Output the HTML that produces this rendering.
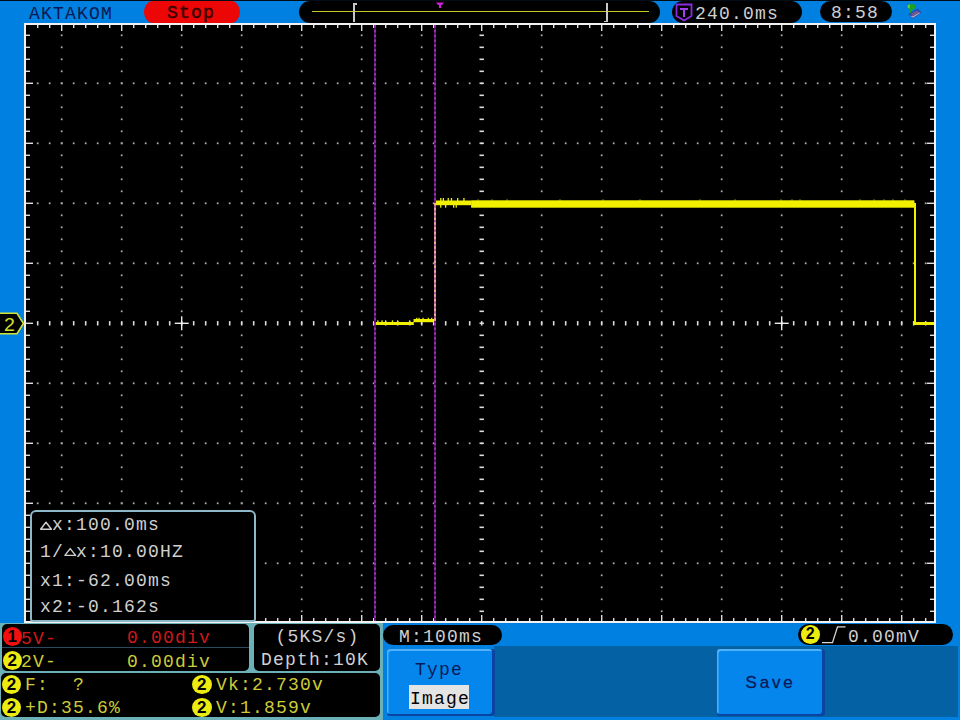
<!DOCTYPE html>
<html><head><meta charset="utf-8">
<style>
html,body{margin:0;padding:0;}
body{width:960px;height:720px;position:relative;overflow:hidden;background:#0080e0;font-family:"Liberation Mono",monospace;}
.a{position:absolute;}
.t{position:absolute;font-size:18px;line-height:18px;letter-spacing:1.2px;white-space:pre;}
.pill{position:absolute;background:#000;}
.circ{position:absolute;border-radius:50%;text-align:center;color:#000;font-family:"Liberation Sans",sans-serif;font-size:17px;line-height:19px;font-weight:bold;}
.w{color:#d0d0d0;}
.y{color:#cccc38;}
.r{color:#d01818;}
</style></head><body>
<div class="a" style="left:0;top:0;width:960px;height:1.4px;background:#040c18"></div>
<svg class="a" style="left:0;top:0" width="960" height="720" viewBox="0 0 960 720">
<rect x="24.00" y="23.00" width="912.00" height="600.00" fill="#f2f2f2"/>
<rect x="26.00" y="25.00" width="908.00" height="596.00" fill="#000"/>
<rect x="60.80" y="34.40" width="1.80" height="1.80" fill="#a8a8a8"/>
<rect x="60.80" y="46.40" width="1.80" height="1.80" fill="#a8a8a8"/>
<rect x="60.80" y="58.40" width="1.80" height="1.80" fill="#a8a8a8"/>
<rect x="60.80" y="70.40" width="1.80" height="1.80" fill="#a8a8a8"/>
<rect x="60.80" y="82.40" width="1.80" height="1.80" fill="#a8a8a8"/>
<rect x="60.80" y="94.40" width="1.80" height="1.80" fill="#a8a8a8"/>
<rect x="60.80" y="106.40" width="1.80" height="1.80" fill="#a8a8a8"/>
<rect x="60.80" y="118.40" width="1.80" height="1.80" fill="#a8a8a8"/>
<rect x="60.80" y="130.40" width="1.80" height="1.80" fill="#a8a8a8"/>
<rect x="60.80" y="142.40" width="1.80" height="1.80" fill="#a8a8a8"/>
<rect x="60.80" y="154.40" width="1.80" height="1.80" fill="#a8a8a8"/>
<rect x="60.80" y="166.40" width="1.80" height="1.80" fill="#a8a8a8"/>
<rect x="60.80" y="178.40" width="1.80" height="1.80" fill="#a8a8a8"/>
<rect x="60.80" y="190.40" width="1.80" height="1.80" fill="#a8a8a8"/>
<rect x="60.80" y="202.40" width="1.80" height="1.80" fill="#a8a8a8"/>
<rect x="60.80" y="214.40" width="1.80" height="1.80" fill="#a8a8a8"/>
<rect x="60.80" y="226.40" width="1.80" height="1.80" fill="#a8a8a8"/>
<rect x="60.80" y="238.40" width="1.80" height="1.80" fill="#a8a8a8"/>
<rect x="60.80" y="250.40" width="1.80" height="1.80" fill="#a8a8a8"/>
<rect x="60.80" y="262.40" width="1.80" height="1.80" fill="#a8a8a8"/>
<rect x="60.80" y="274.40" width="1.80" height="1.80" fill="#a8a8a8"/>
<rect x="60.80" y="286.40" width="1.80" height="1.80" fill="#a8a8a8"/>
<rect x="60.80" y="298.40" width="1.80" height="1.80" fill="#a8a8a8"/>
<rect x="60.80" y="310.40" width="1.80" height="1.80" fill="#a8a8a8"/>
<rect x="60.80" y="322.40" width="1.80" height="1.80" fill="#a8a8a8"/>
<rect x="60.80" y="334.40" width="1.80" height="1.80" fill="#a8a8a8"/>
<rect x="60.80" y="346.40" width="1.80" height="1.80" fill="#a8a8a8"/>
<rect x="60.80" y="358.40" width="1.80" height="1.80" fill="#a8a8a8"/>
<rect x="60.80" y="370.40" width="1.80" height="1.80" fill="#a8a8a8"/>
<rect x="60.80" y="382.40" width="1.80" height="1.80" fill="#a8a8a8"/>
<rect x="60.80" y="394.40" width="1.80" height="1.80" fill="#a8a8a8"/>
<rect x="60.80" y="406.40" width="1.80" height="1.80" fill="#a8a8a8"/>
<rect x="60.80" y="418.40" width="1.80" height="1.80" fill="#a8a8a8"/>
<rect x="60.80" y="430.40" width="1.80" height="1.80" fill="#a8a8a8"/>
<rect x="60.80" y="442.40" width="1.80" height="1.80" fill="#a8a8a8"/>
<rect x="60.80" y="454.40" width="1.80" height="1.80" fill="#a8a8a8"/>
<rect x="60.80" y="466.40" width="1.80" height="1.80" fill="#a8a8a8"/>
<rect x="60.80" y="478.40" width="1.80" height="1.80" fill="#a8a8a8"/>
<rect x="60.80" y="490.40" width="1.80" height="1.80" fill="#a8a8a8"/>
<rect x="60.80" y="502.40" width="1.80" height="1.80" fill="#a8a8a8"/>
<rect x="60.80" y="514.40" width="1.80" height="1.80" fill="#a8a8a8"/>
<rect x="60.80" y="526.40" width="1.80" height="1.80" fill="#a8a8a8"/>
<rect x="60.80" y="538.40" width="1.80" height="1.80" fill="#a8a8a8"/>
<rect x="60.80" y="550.40" width="1.80" height="1.80" fill="#a8a8a8"/>
<rect x="60.80" y="562.40" width="1.80" height="1.80" fill="#a8a8a8"/>
<rect x="60.80" y="574.40" width="1.80" height="1.80" fill="#a8a8a8"/>
<rect x="60.80" y="586.40" width="1.80" height="1.80" fill="#a8a8a8"/>
<rect x="60.80" y="598.40" width="1.80" height="1.80" fill="#a8a8a8"/>
<rect x="60.80" y="610.40" width="1.80" height="1.80" fill="#a8a8a8"/>
<rect x="120.80" y="34.40" width="1.80" height="1.80" fill="#a8a8a8"/>
<rect x="120.80" y="46.40" width="1.80" height="1.80" fill="#a8a8a8"/>
<rect x="120.80" y="58.40" width="1.80" height="1.80" fill="#a8a8a8"/>
<rect x="120.80" y="70.40" width="1.80" height="1.80" fill="#a8a8a8"/>
<rect x="120.80" y="82.40" width="1.80" height="1.80" fill="#a8a8a8"/>
<rect x="120.80" y="94.40" width="1.80" height="1.80" fill="#a8a8a8"/>
<rect x="120.80" y="106.40" width="1.80" height="1.80" fill="#a8a8a8"/>
<rect x="120.80" y="118.40" width="1.80" height="1.80" fill="#a8a8a8"/>
<rect x="120.80" y="130.40" width="1.80" height="1.80" fill="#a8a8a8"/>
<rect x="120.80" y="142.40" width="1.80" height="1.80" fill="#a8a8a8"/>
<rect x="120.80" y="154.40" width="1.80" height="1.80" fill="#a8a8a8"/>
<rect x="120.80" y="166.40" width="1.80" height="1.80" fill="#a8a8a8"/>
<rect x="120.80" y="178.40" width="1.80" height="1.80" fill="#a8a8a8"/>
<rect x="120.80" y="190.40" width="1.80" height="1.80" fill="#a8a8a8"/>
<rect x="120.80" y="202.40" width="1.80" height="1.80" fill="#a8a8a8"/>
<rect x="120.80" y="214.40" width="1.80" height="1.80" fill="#a8a8a8"/>
<rect x="120.80" y="226.40" width="1.80" height="1.80" fill="#a8a8a8"/>
<rect x="120.80" y="238.40" width="1.80" height="1.80" fill="#a8a8a8"/>
<rect x="120.80" y="250.40" width="1.80" height="1.80" fill="#a8a8a8"/>
<rect x="120.80" y="262.40" width="1.80" height="1.80" fill="#a8a8a8"/>
<rect x="120.80" y="274.40" width="1.80" height="1.80" fill="#a8a8a8"/>
<rect x="120.80" y="286.40" width="1.80" height="1.80" fill="#a8a8a8"/>
<rect x="120.80" y="298.40" width="1.80" height="1.80" fill="#a8a8a8"/>
<rect x="120.80" y="310.40" width="1.80" height="1.80" fill="#a8a8a8"/>
<rect x="120.80" y="322.40" width="1.80" height="1.80" fill="#a8a8a8"/>
<rect x="120.80" y="334.40" width="1.80" height="1.80" fill="#a8a8a8"/>
<rect x="120.80" y="346.40" width="1.80" height="1.80" fill="#a8a8a8"/>
<rect x="120.80" y="358.40" width="1.80" height="1.80" fill="#a8a8a8"/>
<rect x="120.80" y="370.40" width="1.80" height="1.80" fill="#a8a8a8"/>
<rect x="120.80" y="382.40" width="1.80" height="1.80" fill="#a8a8a8"/>
<rect x="120.80" y="394.40" width="1.80" height="1.80" fill="#a8a8a8"/>
<rect x="120.80" y="406.40" width="1.80" height="1.80" fill="#a8a8a8"/>
<rect x="120.80" y="418.40" width="1.80" height="1.80" fill="#a8a8a8"/>
<rect x="120.80" y="430.40" width="1.80" height="1.80" fill="#a8a8a8"/>
<rect x="120.80" y="442.40" width="1.80" height="1.80" fill="#a8a8a8"/>
<rect x="120.80" y="454.40" width="1.80" height="1.80" fill="#a8a8a8"/>
<rect x="120.80" y="466.40" width="1.80" height="1.80" fill="#a8a8a8"/>
<rect x="120.80" y="478.40" width="1.80" height="1.80" fill="#a8a8a8"/>
<rect x="120.80" y="490.40" width="1.80" height="1.80" fill="#a8a8a8"/>
<rect x="120.80" y="502.40" width="1.80" height="1.80" fill="#a8a8a8"/>
<rect x="120.80" y="514.40" width="1.80" height="1.80" fill="#a8a8a8"/>
<rect x="120.80" y="526.40" width="1.80" height="1.80" fill="#a8a8a8"/>
<rect x="120.80" y="538.40" width="1.80" height="1.80" fill="#a8a8a8"/>
<rect x="120.80" y="550.40" width="1.80" height="1.80" fill="#a8a8a8"/>
<rect x="120.80" y="562.40" width="1.80" height="1.80" fill="#a8a8a8"/>
<rect x="120.80" y="574.40" width="1.80" height="1.80" fill="#a8a8a8"/>
<rect x="120.80" y="586.40" width="1.80" height="1.80" fill="#a8a8a8"/>
<rect x="120.80" y="598.40" width="1.80" height="1.80" fill="#a8a8a8"/>
<rect x="120.80" y="610.40" width="1.80" height="1.80" fill="#a8a8a8"/>
<rect x="180.80" y="34.40" width="1.80" height="1.80" fill="#a8a8a8"/>
<rect x="180.80" y="46.40" width="1.80" height="1.80" fill="#a8a8a8"/>
<rect x="180.80" y="58.40" width="1.80" height="1.80" fill="#a8a8a8"/>
<rect x="180.80" y="70.40" width="1.80" height="1.80" fill="#a8a8a8"/>
<rect x="180.80" y="82.40" width="1.80" height="1.80" fill="#a8a8a8"/>
<rect x="180.80" y="94.40" width="1.80" height="1.80" fill="#a8a8a8"/>
<rect x="180.80" y="106.40" width="1.80" height="1.80" fill="#a8a8a8"/>
<rect x="180.80" y="118.40" width="1.80" height="1.80" fill="#a8a8a8"/>
<rect x="180.80" y="130.40" width="1.80" height="1.80" fill="#a8a8a8"/>
<rect x="180.80" y="142.40" width="1.80" height="1.80" fill="#a8a8a8"/>
<rect x="180.80" y="154.40" width="1.80" height="1.80" fill="#a8a8a8"/>
<rect x="180.80" y="166.40" width="1.80" height="1.80" fill="#a8a8a8"/>
<rect x="180.80" y="178.40" width="1.80" height="1.80" fill="#a8a8a8"/>
<rect x="180.80" y="190.40" width="1.80" height="1.80" fill="#a8a8a8"/>
<rect x="180.80" y="202.40" width="1.80" height="1.80" fill="#a8a8a8"/>
<rect x="180.80" y="214.40" width="1.80" height="1.80" fill="#a8a8a8"/>
<rect x="180.80" y="226.40" width="1.80" height="1.80" fill="#a8a8a8"/>
<rect x="180.80" y="238.40" width="1.80" height="1.80" fill="#a8a8a8"/>
<rect x="180.80" y="250.40" width="1.80" height="1.80" fill="#a8a8a8"/>
<rect x="180.80" y="262.40" width="1.80" height="1.80" fill="#a8a8a8"/>
<rect x="180.80" y="274.40" width="1.80" height="1.80" fill="#a8a8a8"/>
<rect x="180.80" y="286.40" width="1.80" height="1.80" fill="#a8a8a8"/>
<rect x="180.80" y="298.40" width="1.80" height="1.80" fill="#a8a8a8"/>
<rect x="180.80" y="310.40" width="1.80" height="1.80" fill="#a8a8a8"/>
<rect x="180.80" y="322.40" width="1.80" height="1.80" fill="#a8a8a8"/>
<rect x="180.80" y="334.40" width="1.80" height="1.80" fill="#a8a8a8"/>
<rect x="180.80" y="346.40" width="1.80" height="1.80" fill="#a8a8a8"/>
<rect x="180.80" y="358.40" width="1.80" height="1.80" fill="#a8a8a8"/>
<rect x="180.80" y="370.40" width="1.80" height="1.80" fill="#a8a8a8"/>
<rect x="180.80" y="382.40" width="1.80" height="1.80" fill="#a8a8a8"/>
<rect x="180.80" y="394.40" width="1.80" height="1.80" fill="#a8a8a8"/>
<rect x="180.80" y="406.40" width="1.80" height="1.80" fill="#a8a8a8"/>
<rect x="180.80" y="418.40" width="1.80" height="1.80" fill="#a8a8a8"/>
<rect x="180.80" y="430.40" width="1.80" height="1.80" fill="#a8a8a8"/>
<rect x="180.80" y="442.40" width="1.80" height="1.80" fill="#a8a8a8"/>
<rect x="180.80" y="454.40" width="1.80" height="1.80" fill="#a8a8a8"/>
<rect x="180.80" y="466.40" width="1.80" height="1.80" fill="#a8a8a8"/>
<rect x="180.80" y="478.40" width="1.80" height="1.80" fill="#a8a8a8"/>
<rect x="180.80" y="490.40" width="1.80" height="1.80" fill="#a8a8a8"/>
<rect x="180.80" y="502.40" width="1.80" height="1.80" fill="#a8a8a8"/>
<rect x="180.80" y="514.40" width="1.80" height="1.80" fill="#a8a8a8"/>
<rect x="180.80" y="526.40" width="1.80" height="1.80" fill="#a8a8a8"/>
<rect x="180.80" y="538.40" width="1.80" height="1.80" fill="#a8a8a8"/>
<rect x="180.80" y="550.40" width="1.80" height="1.80" fill="#a8a8a8"/>
<rect x="180.80" y="562.40" width="1.80" height="1.80" fill="#a8a8a8"/>
<rect x="180.80" y="574.40" width="1.80" height="1.80" fill="#a8a8a8"/>
<rect x="180.80" y="586.40" width="1.80" height="1.80" fill="#a8a8a8"/>
<rect x="180.80" y="598.40" width="1.80" height="1.80" fill="#a8a8a8"/>
<rect x="180.80" y="610.40" width="1.80" height="1.80" fill="#a8a8a8"/>
<rect x="240.80" y="34.40" width="1.80" height="1.80" fill="#a8a8a8"/>
<rect x="240.80" y="46.40" width="1.80" height="1.80" fill="#a8a8a8"/>
<rect x="240.80" y="58.40" width="1.80" height="1.80" fill="#a8a8a8"/>
<rect x="240.80" y="70.40" width="1.80" height="1.80" fill="#a8a8a8"/>
<rect x="240.80" y="82.40" width="1.80" height="1.80" fill="#a8a8a8"/>
<rect x="240.80" y="94.40" width="1.80" height="1.80" fill="#a8a8a8"/>
<rect x="240.80" y="106.40" width="1.80" height="1.80" fill="#a8a8a8"/>
<rect x="240.80" y="118.40" width="1.80" height="1.80" fill="#a8a8a8"/>
<rect x="240.80" y="130.40" width="1.80" height="1.80" fill="#a8a8a8"/>
<rect x="240.80" y="142.40" width="1.80" height="1.80" fill="#a8a8a8"/>
<rect x="240.80" y="154.40" width="1.80" height="1.80" fill="#a8a8a8"/>
<rect x="240.80" y="166.40" width="1.80" height="1.80" fill="#a8a8a8"/>
<rect x="240.80" y="178.40" width="1.80" height="1.80" fill="#a8a8a8"/>
<rect x="240.80" y="190.40" width="1.80" height="1.80" fill="#a8a8a8"/>
<rect x="240.80" y="202.40" width="1.80" height="1.80" fill="#a8a8a8"/>
<rect x="240.80" y="214.40" width="1.80" height="1.80" fill="#a8a8a8"/>
<rect x="240.80" y="226.40" width="1.80" height="1.80" fill="#a8a8a8"/>
<rect x="240.80" y="238.40" width="1.80" height="1.80" fill="#a8a8a8"/>
<rect x="240.80" y="250.40" width="1.80" height="1.80" fill="#a8a8a8"/>
<rect x="240.80" y="262.40" width="1.80" height="1.80" fill="#a8a8a8"/>
<rect x="240.80" y="274.40" width="1.80" height="1.80" fill="#a8a8a8"/>
<rect x="240.80" y="286.40" width="1.80" height="1.80" fill="#a8a8a8"/>
<rect x="240.80" y="298.40" width="1.80" height="1.80" fill="#a8a8a8"/>
<rect x="240.80" y="310.40" width="1.80" height="1.80" fill="#a8a8a8"/>
<rect x="240.80" y="322.40" width="1.80" height="1.80" fill="#a8a8a8"/>
<rect x="240.80" y="334.40" width="1.80" height="1.80" fill="#a8a8a8"/>
<rect x="240.80" y="346.40" width="1.80" height="1.80" fill="#a8a8a8"/>
<rect x="240.80" y="358.40" width="1.80" height="1.80" fill="#a8a8a8"/>
<rect x="240.80" y="370.40" width="1.80" height="1.80" fill="#a8a8a8"/>
<rect x="240.80" y="382.40" width="1.80" height="1.80" fill="#a8a8a8"/>
<rect x="240.80" y="394.40" width="1.80" height="1.80" fill="#a8a8a8"/>
<rect x="240.80" y="406.40" width="1.80" height="1.80" fill="#a8a8a8"/>
<rect x="240.80" y="418.40" width="1.80" height="1.80" fill="#a8a8a8"/>
<rect x="240.80" y="430.40" width="1.80" height="1.80" fill="#a8a8a8"/>
<rect x="240.80" y="442.40" width="1.80" height="1.80" fill="#a8a8a8"/>
<rect x="240.80" y="454.40" width="1.80" height="1.80" fill="#a8a8a8"/>
<rect x="240.80" y="466.40" width="1.80" height="1.80" fill="#a8a8a8"/>
<rect x="240.80" y="478.40" width="1.80" height="1.80" fill="#a8a8a8"/>
<rect x="240.80" y="490.40" width="1.80" height="1.80" fill="#a8a8a8"/>
<rect x="240.80" y="502.40" width="1.80" height="1.80" fill="#a8a8a8"/>
<rect x="240.80" y="514.40" width="1.80" height="1.80" fill="#a8a8a8"/>
<rect x="240.80" y="526.40" width="1.80" height="1.80" fill="#a8a8a8"/>
<rect x="240.80" y="538.40" width="1.80" height="1.80" fill="#a8a8a8"/>
<rect x="240.80" y="550.40" width="1.80" height="1.80" fill="#a8a8a8"/>
<rect x="240.80" y="562.40" width="1.80" height="1.80" fill="#a8a8a8"/>
<rect x="240.80" y="574.40" width="1.80" height="1.80" fill="#a8a8a8"/>
<rect x="240.80" y="586.40" width="1.80" height="1.80" fill="#a8a8a8"/>
<rect x="240.80" y="598.40" width="1.80" height="1.80" fill="#a8a8a8"/>
<rect x="240.80" y="610.40" width="1.80" height="1.80" fill="#a8a8a8"/>
<rect x="300.80" y="34.40" width="1.80" height="1.80" fill="#a8a8a8"/>
<rect x="300.80" y="46.40" width="1.80" height="1.80" fill="#a8a8a8"/>
<rect x="300.80" y="58.40" width="1.80" height="1.80" fill="#a8a8a8"/>
<rect x="300.80" y="70.40" width="1.80" height="1.80" fill="#a8a8a8"/>
<rect x="300.80" y="82.40" width="1.80" height="1.80" fill="#a8a8a8"/>
<rect x="300.80" y="94.40" width="1.80" height="1.80" fill="#a8a8a8"/>
<rect x="300.80" y="106.40" width="1.80" height="1.80" fill="#a8a8a8"/>
<rect x="300.80" y="118.40" width="1.80" height="1.80" fill="#a8a8a8"/>
<rect x="300.80" y="130.40" width="1.80" height="1.80" fill="#a8a8a8"/>
<rect x="300.80" y="142.40" width="1.80" height="1.80" fill="#a8a8a8"/>
<rect x="300.80" y="154.40" width="1.80" height="1.80" fill="#a8a8a8"/>
<rect x="300.80" y="166.40" width="1.80" height="1.80" fill="#a8a8a8"/>
<rect x="300.80" y="178.40" width="1.80" height="1.80" fill="#a8a8a8"/>
<rect x="300.80" y="190.40" width="1.80" height="1.80" fill="#a8a8a8"/>
<rect x="300.80" y="202.40" width="1.80" height="1.80" fill="#a8a8a8"/>
<rect x="300.80" y="214.40" width="1.80" height="1.80" fill="#a8a8a8"/>
<rect x="300.80" y="226.40" width="1.80" height="1.80" fill="#a8a8a8"/>
<rect x="300.80" y="238.40" width="1.80" height="1.80" fill="#a8a8a8"/>
<rect x="300.80" y="250.40" width="1.80" height="1.80" fill="#a8a8a8"/>
<rect x="300.80" y="262.40" width="1.80" height="1.80" fill="#a8a8a8"/>
<rect x="300.80" y="274.40" width="1.80" height="1.80" fill="#a8a8a8"/>
<rect x="300.80" y="286.40" width="1.80" height="1.80" fill="#a8a8a8"/>
<rect x="300.80" y="298.40" width="1.80" height="1.80" fill="#a8a8a8"/>
<rect x="300.80" y="310.40" width="1.80" height="1.80" fill="#a8a8a8"/>
<rect x="300.80" y="322.40" width="1.80" height="1.80" fill="#a8a8a8"/>
<rect x="300.80" y="334.40" width="1.80" height="1.80" fill="#a8a8a8"/>
<rect x="300.80" y="346.40" width="1.80" height="1.80" fill="#a8a8a8"/>
<rect x="300.80" y="358.40" width="1.80" height="1.80" fill="#a8a8a8"/>
<rect x="300.80" y="370.40" width="1.80" height="1.80" fill="#a8a8a8"/>
<rect x="300.80" y="382.40" width="1.80" height="1.80" fill="#a8a8a8"/>
<rect x="300.80" y="394.40" width="1.80" height="1.80" fill="#a8a8a8"/>
<rect x="300.80" y="406.40" width="1.80" height="1.80" fill="#a8a8a8"/>
<rect x="300.80" y="418.40" width="1.80" height="1.80" fill="#a8a8a8"/>
<rect x="300.80" y="430.40" width="1.80" height="1.80" fill="#a8a8a8"/>
<rect x="300.80" y="442.40" width="1.80" height="1.80" fill="#a8a8a8"/>
<rect x="300.80" y="454.40" width="1.80" height="1.80" fill="#a8a8a8"/>
<rect x="300.80" y="466.40" width="1.80" height="1.80" fill="#a8a8a8"/>
<rect x="300.80" y="478.40" width="1.80" height="1.80" fill="#a8a8a8"/>
<rect x="300.80" y="490.40" width="1.80" height="1.80" fill="#a8a8a8"/>
<rect x="300.80" y="502.40" width="1.80" height="1.80" fill="#a8a8a8"/>
<rect x="300.80" y="514.40" width="1.80" height="1.80" fill="#a8a8a8"/>
<rect x="300.80" y="526.40" width="1.80" height="1.80" fill="#a8a8a8"/>
<rect x="300.80" y="538.40" width="1.80" height="1.80" fill="#a8a8a8"/>
<rect x="300.80" y="550.40" width="1.80" height="1.80" fill="#a8a8a8"/>
<rect x="300.80" y="562.40" width="1.80" height="1.80" fill="#a8a8a8"/>
<rect x="300.80" y="574.40" width="1.80" height="1.80" fill="#a8a8a8"/>
<rect x="300.80" y="586.40" width="1.80" height="1.80" fill="#a8a8a8"/>
<rect x="300.80" y="598.40" width="1.80" height="1.80" fill="#a8a8a8"/>
<rect x="300.80" y="610.40" width="1.80" height="1.80" fill="#a8a8a8"/>
<rect x="360.80" y="34.40" width="1.80" height="1.80" fill="#a8a8a8"/>
<rect x="360.80" y="46.40" width="1.80" height="1.80" fill="#a8a8a8"/>
<rect x="360.80" y="58.40" width="1.80" height="1.80" fill="#a8a8a8"/>
<rect x="360.80" y="70.40" width="1.80" height="1.80" fill="#a8a8a8"/>
<rect x="360.80" y="82.40" width="1.80" height="1.80" fill="#a8a8a8"/>
<rect x="360.80" y="94.40" width="1.80" height="1.80" fill="#a8a8a8"/>
<rect x="360.80" y="106.40" width="1.80" height="1.80" fill="#a8a8a8"/>
<rect x="360.80" y="118.40" width="1.80" height="1.80" fill="#a8a8a8"/>
<rect x="360.80" y="130.40" width="1.80" height="1.80" fill="#a8a8a8"/>
<rect x="360.80" y="142.40" width="1.80" height="1.80" fill="#a8a8a8"/>
<rect x="360.80" y="154.40" width="1.80" height="1.80" fill="#a8a8a8"/>
<rect x="360.80" y="166.40" width="1.80" height="1.80" fill="#a8a8a8"/>
<rect x="360.80" y="178.40" width="1.80" height="1.80" fill="#a8a8a8"/>
<rect x="360.80" y="190.40" width="1.80" height="1.80" fill="#a8a8a8"/>
<rect x="360.80" y="202.40" width="1.80" height="1.80" fill="#a8a8a8"/>
<rect x="360.80" y="214.40" width="1.80" height="1.80" fill="#a8a8a8"/>
<rect x="360.80" y="226.40" width="1.80" height="1.80" fill="#a8a8a8"/>
<rect x="360.80" y="238.40" width="1.80" height="1.80" fill="#a8a8a8"/>
<rect x="360.80" y="250.40" width="1.80" height="1.80" fill="#a8a8a8"/>
<rect x="360.80" y="262.40" width="1.80" height="1.80" fill="#a8a8a8"/>
<rect x="360.80" y="274.40" width="1.80" height="1.80" fill="#a8a8a8"/>
<rect x="360.80" y="286.40" width="1.80" height="1.80" fill="#a8a8a8"/>
<rect x="360.80" y="298.40" width="1.80" height="1.80" fill="#a8a8a8"/>
<rect x="360.80" y="310.40" width="1.80" height="1.80" fill="#a8a8a8"/>
<rect x="360.80" y="322.40" width="1.80" height="1.80" fill="#a8a8a8"/>
<rect x="360.80" y="334.40" width="1.80" height="1.80" fill="#a8a8a8"/>
<rect x="360.80" y="346.40" width="1.80" height="1.80" fill="#a8a8a8"/>
<rect x="360.80" y="358.40" width="1.80" height="1.80" fill="#a8a8a8"/>
<rect x="360.80" y="370.40" width="1.80" height="1.80" fill="#a8a8a8"/>
<rect x="360.80" y="382.40" width="1.80" height="1.80" fill="#a8a8a8"/>
<rect x="360.80" y="394.40" width="1.80" height="1.80" fill="#a8a8a8"/>
<rect x="360.80" y="406.40" width="1.80" height="1.80" fill="#a8a8a8"/>
<rect x="360.80" y="418.40" width="1.80" height="1.80" fill="#a8a8a8"/>
<rect x="360.80" y="430.40" width="1.80" height="1.80" fill="#a8a8a8"/>
<rect x="360.80" y="442.40" width="1.80" height="1.80" fill="#a8a8a8"/>
<rect x="360.80" y="454.40" width="1.80" height="1.80" fill="#a8a8a8"/>
<rect x="360.80" y="466.40" width="1.80" height="1.80" fill="#a8a8a8"/>
<rect x="360.80" y="478.40" width="1.80" height="1.80" fill="#a8a8a8"/>
<rect x="360.80" y="490.40" width="1.80" height="1.80" fill="#a8a8a8"/>
<rect x="360.80" y="502.40" width="1.80" height="1.80" fill="#a8a8a8"/>
<rect x="360.80" y="514.40" width="1.80" height="1.80" fill="#a8a8a8"/>
<rect x="360.80" y="526.40" width="1.80" height="1.80" fill="#a8a8a8"/>
<rect x="360.80" y="538.40" width="1.80" height="1.80" fill="#a8a8a8"/>
<rect x="360.80" y="550.40" width="1.80" height="1.80" fill="#a8a8a8"/>
<rect x="360.80" y="562.40" width="1.80" height="1.80" fill="#a8a8a8"/>
<rect x="360.80" y="574.40" width="1.80" height="1.80" fill="#a8a8a8"/>
<rect x="360.80" y="586.40" width="1.80" height="1.80" fill="#a8a8a8"/>
<rect x="360.80" y="598.40" width="1.80" height="1.80" fill="#a8a8a8"/>
<rect x="360.80" y="610.40" width="1.80" height="1.80" fill="#a8a8a8"/>
<rect x="420.80" y="34.40" width="1.80" height="1.80" fill="#a8a8a8"/>
<rect x="420.80" y="46.40" width="1.80" height="1.80" fill="#a8a8a8"/>
<rect x="420.80" y="58.40" width="1.80" height="1.80" fill="#a8a8a8"/>
<rect x="420.80" y="70.40" width="1.80" height="1.80" fill="#a8a8a8"/>
<rect x="420.80" y="82.40" width="1.80" height="1.80" fill="#a8a8a8"/>
<rect x="420.80" y="94.40" width="1.80" height="1.80" fill="#a8a8a8"/>
<rect x="420.80" y="106.40" width="1.80" height="1.80" fill="#a8a8a8"/>
<rect x="420.80" y="118.40" width="1.80" height="1.80" fill="#a8a8a8"/>
<rect x="420.80" y="130.40" width="1.80" height="1.80" fill="#a8a8a8"/>
<rect x="420.80" y="142.40" width="1.80" height="1.80" fill="#a8a8a8"/>
<rect x="420.80" y="154.40" width="1.80" height="1.80" fill="#a8a8a8"/>
<rect x="420.80" y="166.40" width="1.80" height="1.80" fill="#a8a8a8"/>
<rect x="420.80" y="178.40" width="1.80" height="1.80" fill="#a8a8a8"/>
<rect x="420.80" y="190.40" width="1.80" height="1.80" fill="#a8a8a8"/>
<rect x="420.80" y="202.40" width="1.80" height="1.80" fill="#a8a8a8"/>
<rect x="420.80" y="214.40" width="1.80" height="1.80" fill="#a8a8a8"/>
<rect x="420.80" y="226.40" width="1.80" height="1.80" fill="#a8a8a8"/>
<rect x="420.80" y="238.40" width="1.80" height="1.80" fill="#a8a8a8"/>
<rect x="420.80" y="250.40" width="1.80" height="1.80" fill="#a8a8a8"/>
<rect x="420.80" y="262.40" width="1.80" height="1.80" fill="#a8a8a8"/>
<rect x="420.80" y="274.40" width="1.80" height="1.80" fill="#a8a8a8"/>
<rect x="420.80" y="286.40" width="1.80" height="1.80" fill="#a8a8a8"/>
<rect x="420.80" y="298.40" width="1.80" height="1.80" fill="#a8a8a8"/>
<rect x="420.80" y="310.40" width="1.80" height="1.80" fill="#a8a8a8"/>
<rect x="420.80" y="322.40" width="1.80" height="1.80" fill="#a8a8a8"/>
<rect x="420.80" y="334.40" width="1.80" height="1.80" fill="#a8a8a8"/>
<rect x="420.80" y="346.40" width="1.80" height="1.80" fill="#a8a8a8"/>
<rect x="420.80" y="358.40" width="1.80" height="1.80" fill="#a8a8a8"/>
<rect x="420.80" y="370.40" width="1.80" height="1.80" fill="#a8a8a8"/>
<rect x="420.80" y="382.40" width="1.80" height="1.80" fill="#a8a8a8"/>
<rect x="420.80" y="394.40" width="1.80" height="1.80" fill="#a8a8a8"/>
<rect x="420.80" y="406.40" width="1.80" height="1.80" fill="#a8a8a8"/>
<rect x="420.80" y="418.40" width="1.80" height="1.80" fill="#a8a8a8"/>
<rect x="420.80" y="430.40" width="1.80" height="1.80" fill="#a8a8a8"/>
<rect x="420.80" y="442.40" width="1.80" height="1.80" fill="#a8a8a8"/>
<rect x="420.80" y="454.40" width="1.80" height="1.80" fill="#a8a8a8"/>
<rect x="420.80" y="466.40" width="1.80" height="1.80" fill="#a8a8a8"/>
<rect x="420.80" y="478.40" width="1.80" height="1.80" fill="#a8a8a8"/>
<rect x="420.80" y="490.40" width="1.80" height="1.80" fill="#a8a8a8"/>
<rect x="420.80" y="502.40" width="1.80" height="1.80" fill="#a8a8a8"/>
<rect x="420.80" y="514.40" width="1.80" height="1.80" fill="#a8a8a8"/>
<rect x="420.80" y="526.40" width="1.80" height="1.80" fill="#a8a8a8"/>
<rect x="420.80" y="538.40" width="1.80" height="1.80" fill="#a8a8a8"/>
<rect x="420.80" y="550.40" width="1.80" height="1.80" fill="#a8a8a8"/>
<rect x="420.80" y="562.40" width="1.80" height="1.80" fill="#a8a8a8"/>
<rect x="420.80" y="574.40" width="1.80" height="1.80" fill="#a8a8a8"/>
<rect x="420.80" y="586.40" width="1.80" height="1.80" fill="#a8a8a8"/>
<rect x="420.80" y="598.40" width="1.80" height="1.80" fill="#a8a8a8"/>
<rect x="420.80" y="610.40" width="1.80" height="1.80" fill="#a8a8a8"/>
<rect x="540.80" y="34.40" width="1.80" height="1.80" fill="#a8a8a8"/>
<rect x="540.80" y="46.40" width="1.80" height="1.80" fill="#a8a8a8"/>
<rect x="540.80" y="58.40" width="1.80" height="1.80" fill="#a8a8a8"/>
<rect x="540.80" y="70.40" width="1.80" height="1.80" fill="#a8a8a8"/>
<rect x="540.80" y="82.40" width="1.80" height="1.80" fill="#a8a8a8"/>
<rect x="540.80" y="94.40" width="1.80" height="1.80" fill="#a8a8a8"/>
<rect x="540.80" y="106.40" width="1.80" height="1.80" fill="#a8a8a8"/>
<rect x="540.80" y="118.40" width="1.80" height="1.80" fill="#a8a8a8"/>
<rect x="540.80" y="130.40" width="1.80" height="1.80" fill="#a8a8a8"/>
<rect x="540.80" y="142.40" width="1.80" height="1.80" fill="#a8a8a8"/>
<rect x="540.80" y="154.40" width="1.80" height="1.80" fill="#a8a8a8"/>
<rect x="540.80" y="166.40" width="1.80" height="1.80" fill="#a8a8a8"/>
<rect x="540.80" y="178.40" width="1.80" height="1.80" fill="#a8a8a8"/>
<rect x="540.80" y="190.40" width="1.80" height="1.80" fill="#a8a8a8"/>
<rect x="540.80" y="202.40" width="1.80" height="1.80" fill="#a8a8a8"/>
<rect x="540.80" y="214.40" width="1.80" height="1.80" fill="#a8a8a8"/>
<rect x="540.80" y="226.40" width="1.80" height="1.80" fill="#a8a8a8"/>
<rect x="540.80" y="238.40" width="1.80" height="1.80" fill="#a8a8a8"/>
<rect x="540.80" y="250.40" width="1.80" height="1.80" fill="#a8a8a8"/>
<rect x="540.80" y="262.40" width="1.80" height="1.80" fill="#a8a8a8"/>
<rect x="540.80" y="274.40" width="1.80" height="1.80" fill="#a8a8a8"/>
<rect x="540.80" y="286.40" width="1.80" height="1.80" fill="#a8a8a8"/>
<rect x="540.80" y="298.40" width="1.80" height="1.80" fill="#a8a8a8"/>
<rect x="540.80" y="310.40" width="1.80" height="1.80" fill="#a8a8a8"/>
<rect x="540.80" y="322.40" width="1.80" height="1.80" fill="#a8a8a8"/>
<rect x="540.80" y="334.40" width="1.80" height="1.80" fill="#a8a8a8"/>
<rect x="540.80" y="346.40" width="1.80" height="1.80" fill="#a8a8a8"/>
<rect x="540.80" y="358.40" width="1.80" height="1.80" fill="#a8a8a8"/>
<rect x="540.80" y="370.40" width="1.80" height="1.80" fill="#a8a8a8"/>
<rect x="540.80" y="382.40" width="1.80" height="1.80" fill="#a8a8a8"/>
<rect x="540.80" y="394.40" width="1.80" height="1.80" fill="#a8a8a8"/>
<rect x="540.80" y="406.40" width="1.80" height="1.80" fill="#a8a8a8"/>
<rect x="540.80" y="418.40" width="1.80" height="1.80" fill="#a8a8a8"/>
<rect x="540.80" y="430.40" width="1.80" height="1.80" fill="#a8a8a8"/>
<rect x="540.80" y="442.40" width="1.80" height="1.80" fill="#a8a8a8"/>
<rect x="540.80" y="454.40" width="1.80" height="1.80" fill="#a8a8a8"/>
<rect x="540.80" y="466.40" width="1.80" height="1.80" fill="#a8a8a8"/>
<rect x="540.80" y="478.40" width="1.80" height="1.80" fill="#a8a8a8"/>
<rect x="540.80" y="490.40" width="1.80" height="1.80" fill="#a8a8a8"/>
<rect x="540.80" y="502.40" width="1.80" height="1.80" fill="#a8a8a8"/>
<rect x="540.80" y="514.40" width="1.80" height="1.80" fill="#a8a8a8"/>
<rect x="540.80" y="526.40" width="1.80" height="1.80" fill="#a8a8a8"/>
<rect x="540.80" y="538.40" width="1.80" height="1.80" fill="#a8a8a8"/>
<rect x="540.80" y="550.40" width="1.80" height="1.80" fill="#a8a8a8"/>
<rect x="540.80" y="562.40" width="1.80" height="1.80" fill="#a8a8a8"/>
<rect x="540.80" y="574.40" width="1.80" height="1.80" fill="#a8a8a8"/>
<rect x="540.80" y="586.40" width="1.80" height="1.80" fill="#a8a8a8"/>
<rect x="540.80" y="598.40" width="1.80" height="1.80" fill="#a8a8a8"/>
<rect x="540.80" y="610.40" width="1.80" height="1.80" fill="#a8a8a8"/>
<rect x="600.80" y="34.40" width="1.80" height="1.80" fill="#a8a8a8"/>
<rect x="600.80" y="46.40" width="1.80" height="1.80" fill="#a8a8a8"/>
<rect x="600.80" y="58.40" width="1.80" height="1.80" fill="#a8a8a8"/>
<rect x="600.80" y="70.40" width="1.80" height="1.80" fill="#a8a8a8"/>
<rect x="600.80" y="82.40" width="1.80" height="1.80" fill="#a8a8a8"/>
<rect x="600.80" y="94.40" width="1.80" height="1.80" fill="#a8a8a8"/>
<rect x="600.80" y="106.40" width="1.80" height="1.80" fill="#a8a8a8"/>
<rect x="600.80" y="118.40" width="1.80" height="1.80" fill="#a8a8a8"/>
<rect x="600.80" y="130.40" width="1.80" height="1.80" fill="#a8a8a8"/>
<rect x="600.80" y="142.40" width="1.80" height="1.80" fill="#a8a8a8"/>
<rect x="600.80" y="154.40" width="1.80" height="1.80" fill="#a8a8a8"/>
<rect x="600.80" y="166.40" width="1.80" height="1.80" fill="#a8a8a8"/>
<rect x="600.80" y="178.40" width="1.80" height="1.80" fill="#a8a8a8"/>
<rect x="600.80" y="190.40" width="1.80" height="1.80" fill="#a8a8a8"/>
<rect x="600.80" y="202.40" width="1.80" height="1.80" fill="#a8a8a8"/>
<rect x="600.80" y="214.40" width="1.80" height="1.80" fill="#a8a8a8"/>
<rect x="600.80" y="226.40" width="1.80" height="1.80" fill="#a8a8a8"/>
<rect x="600.80" y="238.40" width="1.80" height="1.80" fill="#a8a8a8"/>
<rect x="600.80" y="250.40" width="1.80" height="1.80" fill="#a8a8a8"/>
<rect x="600.80" y="262.40" width="1.80" height="1.80" fill="#a8a8a8"/>
<rect x="600.80" y="274.40" width="1.80" height="1.80" fill="#a8a8a8"/>
<rect x="600.80" y="286.40" width="1.80" height="1.80" fill="#a8a8a8"/>
<rect x="600.80" y="298.40" width="1.80" height="1.80" fill="#a8a8a8"/>
<rect x="600.80" y="310.40" width="1.80" height="1.80" fill="#a8a8a8"/>
<rect x="600.80" y="322.40" width="1.80" height="1.80" fill="#a8a8a8"/>
<rect x="600.80" y="334.40" width="1.80" height="1.80" fill="#a8a8a8"/>
<rect x="600.80" y="346.40" width="1.80" height="1.80" fill="#a8a8a8"/>
<rect x="600.80" y="358.40" width="1.80" height="1.80" fill="#a8a8a8"/>
<rect x="600.80" y="370.40" width="1.80" height="1.80" fill="#a8a8a8"/>
<rect x="600.80" y="382.40" width="1.80" height="1.80" fill="#a8a8a8"/>
<rect x="600.80" y="394.40" width="1.80" height="1.80" fill="#a8a8a8"/>
<rect x="600.80" y="406.40" width="1.80" height="1.80" fill="#a8a8a8"/>
<rect x="600.80" y="418.40" width="1.80" height="1.80" fill="#a8a8a8"/>
<rect x="600.80" y="430.40" width="1.80" height="1.80" fill="#a8a8a8"/>
<rect x="600.80" y="442.40" width="1.80" height="1.80" fill="#a8a8a8"/>
<rect x="600.80" y="454.40" width="1.80" height="1.80" fill="#a8a8a8"/>
<rect x="600.80" y="466.40" width="1.80" height="1.80" fill="#a8a8a8"/>
<rect x="600.80" y="478.40" width="1.80" height="1.80" fill="#a8a8a8"/>
<rect x="600.80" y="490.40" width="1.80" height="1.80" fill="#a8a8a8"/>
<rect x="600.80" y="502.40" width="1.80" height="1.80" fill="#a8a8a8"/>
<rect x="600.80" y="514.40" width="1.80" height="1.80" fill="#a8a8a8"/>
<rect x="600.80" y="526.40" width="1.80" height="1.80" fill="#a8a8a8"/>
<rect x="600.80" y="538.40" width="1.80" height="1.80" fill="#a8a8a8"/>
<rect x="600.80" y="550.40" width="1.80" height="1.80" fill="#a8a8a8"/>
<rect x="600.80" y="562.40" width="1.80" height="1.80" fill="#a8a8a8"/>
<rect x="600.80" y="574.40" width="1.80" height="1.80" fill="#a8a8a8"/>
<rect x="600.80" y="586.40" width="1.80" height="1.80" fill="#a8a8a8"/>
<rect x="600.80" y="598.40" width="1.80" height="1.80" fill="#a8a8a8"/>
<rect x="600.80" y="610.40" width="1.80" height="1.80" fill="#a8a8a8"/>
<rect x="660.80" y="34.40" width="1.80" height="1.80" fill="#a8a8a8"/>
<rect x="660.80" y="46.40" width="1.80" height="1.80" fill="#a8a8a8"/>
<rect x="660.80" y="58.40" width="1.80" height="1.80" fill="#a8a8a8"/>
<rect x="660.80" y="70.40" width="1.80" height="1.80" fill="#a8a8a8"/>
<rect x="660.80" y="82.40" width="1.80" height="1.80" fill="#a8a8a8"/>
<rect x="660.80" y="94.40" width="1.80" height="1.80" fill="#a8a8a8"/>
<rect x="660.80" y="106.40" width="1.80" height="1.80" fill="#a8a8a8"/>
<rect x="660.80" y="118.40" width="1.80" height="1.80" fill="#a8a8a8"/>
<rect x="660.80" y="130.40" width="1.80" height="1.80" fill="#a8a8a8"/>
<rect x="660.80" y="142.40" width="1.80" height="1.80" fill="#a8a8a8"/>
<rect x="660.80" y="154.40" width="1.80" height="1.80" fill="#a8a8a8"/>
<rect x="660.80" y="166.40" width="1.80" height="1.80" fill="#a8a8a8"/>
<rect x="660.80" y="178.40" width="1.80" height="1.80" fill="#a8a8a8"/>
<rect x="660.80" y="190.40" width="1.80" height="1.80" fill="#a8a8a8"/>
<rect x="660.80" y="202.40" width="1.80" height="1.80" fill="#a8a8a8"/>
<rect x="660.80" y="214.40" width="1.80" height="1.80" fill="#a8a8a8"/>
<rect x="660.80" y="226.40" width="1.80" height="1.80" fill="#a8a8a8"/>
<rect x="660.80" y="238.40" width="1.80" height="1.80" fill="#a8a8a8"/>
<rect x="660.80" y="250.40" width="1.80" height="1.80" fill="#a8a8a8"/>
<rect x="660.80" y="262.40" width="1.80" height="1.80" fill="#a8a8a8"/>
<rect x="660.80" y="274.40" width="1.80" height="1.80" fill="#a8a8a8"/>
<rect x="660.80" y="286.40" width="1.80" height="1.80" fill="#a8a8a8"/>
<rect x="660.80" y="298.40" width="1.80" height="1.80" fill="#a8a8a8"/>
<rect x="660.80" y="310.40" width="1.80" height="1.80" fill="#a8a8a8"/>
<rect x="660.80" y="322.40" width="1.80" height="1.80" fill="#a8a8a8"/>
<rect x="660.80" y="334.40" width="1.80" height="1.80" fill="#a8a8a8"/>
<rect x="660.80" y="346.40" width="1.80" height="1.80" fill="#a8a8a8"/>
<rect x="660.80" y="358.40" width="1.80" height="1.80" fill="#a8a8a8"/>
<rect x="660.80" y="370.40" width="1.80" height="1.80" fill="#a8a8a8"/>
<rect x="660.80" y="382.40" width="1.80" height="1.80" fill="#a8a8a8"/>
<rect x="660.80" y="394.40" width="1.80" height="1.80" fill="#a8a8a8"/>
<rect x="660.80" y="406.40" width="1.80" height="1.80" fill="#a8a8a8"/>
<rect x="660.80" y="418.40" width="1.80" height="1.80" fill="#a8a8a8"/>
<rect x="660.80" y="430.40" width="1.80" height="1.80" fill="#a8a8a8"/>
<rect x="660.80" y="442.40" width="1.80" height="1.80" fill="#a8a8a8"/>
<rect x="660.80" y="454.40" width="1.80" height="1.80" fill="#a8a8a8"/>
<rect x="660.80" y="466.40" width="1.80" height="1.80" fill="#a8a8a8"/>
<rect x="660.80" y="478.40" width="1.80" height="1.80" fill="#a8a8a8"/>
<rect x="660.80" y="490.40" width="1.80" height="1.80" fill="#a8a8a8"/>
<rect x="660.80" y="502.40" width="1.80" height="1.80" fill="#a8a8a8"/>
<rect x="660.80" y="514.40" width="1.80" height="1.80" fill="#a8a8a8"/>
<rect x="660.80" y="526.40" width="1.80" height="1.80" fill="#a8a8a8"/>
<rect x="660.80" y="538.40" width="1.80" height="1.80" fill="#a8a8a8"/>
<rect x="660.80" y="550.40" width="1.80" height="1.80" fill="#a8a8a8"/>
<rect x="660.80" y="562.40" width="1.80" height="1.80" fill="#a8a8a8"/>
<rect x="660.80" y="574.40" width="1.80" height="1.80" fill="#a8a8a8"/>
<rect x="660.80" y="586.40" width="1.80" height="1.80" fill="#a8a8a8"/>
<rect x="660.80" y="598.40" width="1.80" height="1.80" fill="#a8a8a8"/>
<rect x="660.80" y="610.40" width="1.80" height="1.80" fill="#a8a8a8"/>
<rect x="720.80" y="34.40" width="1.80" height="1.80" fill="#a8a8a8"/>
<rect x="720.80" y="46.40" width="1.80" height="1.80" fill="#a8a8a8"/>
<rect x="720.80" y="58.40" width="1.80" height="1.80" fill="#a8a8a8"/>
<rect x="720.80" y="70.40" width="1.80" height="1.80" fill="#a8a8a8"/>
<rect x="720.80" y="82.40" width="1.80" height="1.80" fill="#a8a8a8"/>
<rect x="720.80" y="94.40" width="1.80" height="1.80" fill="#a8a8a8"/>
<rect x="720.80" y="106.40" width="1.80" height="1.80" fill="#a8a8a8"/>
<rect x="720.80" y="118.40" width="1.80" height="1.80" fill="#a8a8a8"/>
<rect x="720.80" y="130.40" width="1.80" height="1.80" fill="#a8a8a8"/>
<rect x="720.80" y="142.40" width="1.80" height="1.80" fill="#a8a8a8"/>
<rect x="720.80" y="154.40" width="1.80" height="1.80" fill="#a8a8a8"/>
<rect x="720.80" y="166.40" width="1.80" height="1.80" fill="#a8a8a8"/>
<rect x="720.80" y="178.40" width="1.80" height="1.80" fill="#a8a8a8"/>
<rect x="720.80" y="190.40" width="1.80" height="1.80" fill="#a8a8a8"/>
<rect x="720.80" y="202.40" width="1.80" height="1.80" fill="#a8a8a8"/>
<rect x="720.80" y="214.40" width="1.80" height="1.80" fill="#a8a8a8"/>
<rect x="720.80" y="226.40" width="1.80" height="1.80" fill="#a8a8a8"/>
<rect x="720.80" y="238.40" width="1.80" height="1.80" fill="#a8a8a8"/>
<rect x="720.80" y="250.40" width="1.80" height="1.80" fill="#a8a8a8"/>
<rect x="720.80" y="262.40" width="1.80" height="1.80" fill="#a8a8a8"/>
<rect x="720.80" y="274.40" width="1.80" height="1.80" fill="#a8a8a8"/>
<rect x="720.80" y="286.40" width="1.80" height="1.80" fill="#a8a8a8"/>
<rect x="720.80" y="298.40" width="1.80" height="1.80" fill="#a8a8a8"/>
<rect x="720.80" y="310.40" width="1.80" height="1.80" fill="#a8a8a8"/>
<rect x="720.80" y="322.40" width="1.80" height="1.80" fill="#a8a8a8"/>
<rect x="720.80" y="334.40" width="1.80" height="1.80" fill="#a8a8a8"/>
<rect x="720.80" y="346.40" width="1.80" height="1.80" fill="#a8a8a8"/>
<rect x="720.80" y="358.40" width="1.80" height="1.80" fill="#a8a8a8"/>
<rect x="720.80" y="370.40" width="1.80" height="1.80" fill="#a8a8a8"/>
<rect x="720.80" y="382.40" width="1.80" height="1.80" fill="#a8a8a8"/>
<rect x="720.80" y="394.40" width="1.80" height="1.80" fill="#a8a8a8"/>
<rect x="720.80" y="406.40" width="1.80" height="1.80" fill="#a8a8a8"/>
<rect x="720.80" y="418.40" width="1.80" height="1.80" fill="#a8a8a8"/>
<rect x="720.80" y="430.40" width="1.80" height="1.80" fill="#a8a8a8"/>
<rect x="720.80" y="442.40" width="1.80" height="1.80" fill="#a8a8a8"/>
<rect x="720.80" y="454.40" width="1.80" height="1.80" fill="#a8a8a8"/>
<rect x="720.80" y="466.40" width="1.80" height="1.80" fill="#a8a8a8"/>
<rect x="720.80" y="478.40" width="1.80" height="1.80" fill="#a8a8a8"/>
<rect x="720.80" y="490.40" width="1.80" height="1.80" fill="#a8a8a8"/>
<rect x="720.80" y="502.40" width="1.80" height="1.80" fill="#a8a8a8"/>
<rect x="720.80" y="514.40" width="1.80" height="1.80" fill="#a8a8a8"/>
<rect x="720.80" y="526.40" width="1.80" height="1.80" fill="#a8a8a8"/>
<rect x="720.80" y="538.40" width="1.80" height="1.80" fill="#a8a8a8"/>
<rect x="720.80" y="550.40" width="1.80" height="1.80" fill="#a8a8a8"/>
<rect x="720.80" y="562.40" width="1.80" height="1.80" fill="#a8a8a8"/>
<rect x="720.80" y="574.40" width="1.80" height="1.80" fill="#a8a8a8"/>
<rect x="720.80" y="586.40" width="1.80" height="1.80" fill="#a8a8a8"/>
<rect x="720.80" y="598.40" width="1.80" height="1.80" fill="#a8a8a8"/>
<rect x="720.80" y="610.40" width="1.80" height="1.80" fill="#a8a8a8"/>
<rect x="780.80" y="34.40" width="1.80" height="1.80" fill="#a8a8a8"/>
<rect x="780.80" y="46.40" width="1.80" height="1.80" fill="#a8a8a8"/>
<rect x="780.80" y="58.40" width="1.80" height="1.80" fill="#a8a8a8"/>
<rect x="780.80" y="70.40" width="1.80" height="1.80" fill="#a8a8a8"/>
<rect x="780.80" y="82.40" width="1.80" height="1.80" fill="#a8a8a8"/>
<rect x="780.80" y="94.40" width="1.80" height="1.80" fill="#a8a8a8"/>
<rect x="780.80" y="106.40" width="1.80" height="1.80" fill="#a8a8a8"/>
<rect x="780.80" y="118.40" width="1.80" height="1.80" fill="#a8a8a8"/>
<rect x="780.80" y="130.40" width="1.80" height="1.80" fill="#a8a8a8"/>
<rect x="780.80" y="142.40" width="1.80" height="1.80" fill="#a8a8a8"/>
<rect x="780.80" y="154.40" width="1.80" height="1.80" fill="#a8a8a8"/>
<rect x="780.80" y="166.40" width="1.80" height="1.80" fill="#a8a8a8"/>
<rect x="780.80" y="178.40" width="1.80" height="1.80" fill="#a8a8a8"/>
<rect x="780.80" y="190.40" width="1.80" height="1.80" fill="#a8a8a8"/>
<rect x="780.80" y="202.40" width="1.80" height="1.80" fill="#a8a8a8"/>
<rect x="780.80" y="214.40" width="1.80" height="1.80" fill="#a8a8a8"/>
<rect x="780.80" y="226.40" width="1.80" height="1.80" fill="#a8a8a8"/>
<rect x="780.80" y="238.40" width="1.80" height="1.80" fill="#a8a8a8"/>
<rect x="780.80" y="250.40" width="1.80" height="1.80" fill="#a8a8a8"/>
<rect x="780.80" y="262.40" width="1.80" height="1.80" fill="#a8a8a8"/>
<rect x="780.80" y="274.40" width="1.80" height="1.80" fill="#a8a8a8"/>
<rect x="780.80" y="286.40" width="1.80" height="1.80" fill="#a8a8a8"/>
<rect x="780.80" y="298.40" width="1.80" height="1.80" fill="#a8a8a8"/>
<rect x="780.80" y="310.40" width="1.80" height="1.80" fill="#a8a8a8"/>
<rect x="780.80" y="322.40" width="1.80" height="1.80" fill="#a8a8a8"/>
<rect x="780.80" y="334.40" width="1.80" height="1.80" fill="#a8a8a8"/>
<rect x="780.80" y="346.40" width="1.80" height="1.80" fill="#a8a8a8"/>
<rect x="780.80" y="358.40" width="1.80" height="1.80" fill="#a8a8a8"/>
<rect x="780.80" y="370.40" width="1.80" height="1.80" fill="#a8a8a8"/>
<rect x="780.80" y="382.40" width="1.80" height="1.80" fill="#a8a8a8"/>
<rect x="780.80" y="394.40" width="1.80" height="1.80" fill="#a8a8a8"/>
<rect x="780.80" y="406.40" width="1.80" height="1.80" fill="#a8a8a8"/>
<rect x="780.80" y="418.40" width="1.80" height="1.80" fill="#a8a8a8"/>
<rect x="780.80" y="430.40" width="1.80" height="1.80" fill="#a8a8a8"/>
<rect x="780.80" y="442.40" width="1.80" height="1.80" fill="#a8a8a8"/>
<rect x="780.80" y="454.40" width="1.80" height="1.80" fill="#a8a8a8"/>
<rect x="780.80" y="466.40" width="1.80" height="1.80" fill="#a8a8a8"/>
<rect x="780.80" y="478.40" width="1.80" height="1.80" fill="#a8a8a8"/>
<rect x="780.80" y="490.40" width="1.80" height="1.80" fill="#a8a8a8"/>
<rect x="780.80" y="502.40" width="1.80" height="1.80" fill="#a8a8a8"/>
<rect x="780.80" y="514.40" width="1.80" height="1.80" fill="#a8a8a8"/>
<rect x="780.80" y="526.40" width="1.80" height="1.80" fill="#a8a8a8"/>
<rect x="780.80" y="538.40" width="1.80" height="1.80" fill="#a8a8a8"/>
<rect x="780.80" y="550.40" width="1.80" height="1.80" fill="#a8a8a8"/>
<rect x="780.80" y="562.40" width="1.80" height="1.80" fill="#a8a8a8"/>
<rect x="780.80" y="574.40" width="1.80" height="1.80" fill="#a8a8a8"/>
<rect x="780.80" y="586.40" width="1.80" height="1.80" fill="#a8a8a8"/>
<rect x="780.80" y="598.40" width="1.80" height="1.80" fill="#a8a8a8"/>
<rect x="780.80" y="610.40" width="1.80" height="1.80" fill="#a8a8a8"/>
<rect x="840.80" y="34.40" width="1.80" height="1.80" fill="#a8a8a8"/>
<rect x="840.80" y="46.40" width="1.80" height="1.80" fill="#a8a8a8"/>
<rect x="840.80" y="58.40" width="1.80" height="1.80" fill="#a8a8a8"/>
<rect x="840.80" y="70.40" width="1.80" height="1.80" fill="#a8a8a8"/>
<rect x="840.80" y="82.40" width="1.80" height="1.80" fill="#a8a8a8"/>
<rect x="840.80" y="94.40" width="1.80" height="1.80" fill="#a8a8a8"/>
<rect x="840.80" y="106.40" width="1.80" height="1.80" fill="#a8a8a8"/>
<rect x="840.80" y="118.40" width="1.80" height="1.80" fill="#a8a8a8"/>
<rect x="840.80" y="130.40" width="1.80" height="1.80" fill="#a8a8a8"/>
<rect x="840.80" y="142.40" width="1.80" height="1.80" fill="#a8a8a8"/>
<rect x="840.80" y="154.40" width="1.80" height="1.80" fill="#a8a8a8"/>
<rect x="840.80" y="166.40" width="1.80" height="1.80" fill="#a8a8a8"/>
<rect x="840.80" y="178.40" width="1.80" height="1.80" fill="#a8a8a8"/>
<rect x="840.80" y="190.40" width="1.80" height="1.80" fill="#a8a8a8"/>
<rect x="840.80" y="202.40" width="1.80" height="1.80" fill="#a8a8a8"/>
<rect x="840.80" y="214.40" width="1.80" height="1.80" fill="#a8a8a8"/>
<rect x="840.80" y="226.40" width="1.80" height="1.80" fill="#a8a8a8"/>
<rect x="840.80" y="238.40" width="1.80" height="1.80" fill="#a8a8a8"/>
<rect x="840.80" y="250.40" width="1.80" height="1.80" fill="#a8a8a8"/>
<rect x="840.80" y="262.40" width="1.80" height="1.80" fill="#a8a8a8"/>
<rect x="840.80" y="274.40" width="1.80" height="1.80" fill="#a8a8a8"/>
<rect x="840.80" y="286.40" width="1.80" height="1.80" fill="#a8a8a8"/>
<rect x="840.80" y="298.40" width="1.80" height="1.80" fill="#a8a8a8"/>
<rect x="840.80" y="310.40" width="1.80" height="1.80" fill="#a8a8a8"/>
<rect x="840.80" y="322.40" width="1.80" height="1.80" fill="#a8a8a8"/>
<rect x="840.80" y="334.40" width="1.80" height="1.80" fill="#a8a8a8"/>
<rect x="840.80" y="346.40" width="1.80" height="1.80" fill="#a8a8a8"/>
<rect x="840.80" y="358.40" width="1.80" height="1.80" fill="#a8a8a8"/>
<rect x="840.80" y="370.40" width="1.80" height="1.80" fill="#a8a8a8"/>
<rect x="840.80" y="382.40" width="1.80" height="1.80" fill="#a8a8a8"/>
<rect x="840.80" y="394.40" width="1.80" height="1.80" fill="#a8a8a8"/>
<rect x="840.80" y="406.40" width="1.80" height="1.80" fill="#a8a8a8"/>
<rect x="840.80" y="418.40" width="1.80" height="1.80" fill="#a8a8a8"/>
<rect x="840.80" y="430.40" width="1.80" height="1.80" fill="#a8a8a8"/>
<rect x="840.80" y="442.40" width="1.80" height="1.80" fill="#a8a8a8"/>
<rect x="840.80" y="454.40" width="1.80" height="1.80" fill="#a8a8a8"/>
<rect x="840.80" y="466.40" width="1.80" height="1.80" fill="#a8a8a8"/>
<rect x="840.80" y="478.40" width="1.80" height="1.80" fill="#a8a8a8"/>
<rect x="840.80" y="490.40" width="1.80" height="1.80" fill="#a8a8a8"/>
<rect x="840.80" y="502.40" width="1.80" height="1.80" fill="#a8a8a8"/>
<rect x="840.80" y="514.40" width="1.80" height="1.80" fill="#a8a8a8"/>
<rect x="840.80" y="526.40" width="1.80" height="1.80" fill="#a8a8a8"/>
<rect x="840.80" y="538.40" width="1.80" height="1.80" fill="#a8a8a8"/>
<rect x="840.80" y="550.40" width="1.80" height="1.80" fill="#a8a8a8"/>
<rect x="840.80" y="562.40" width="1.80" height="1.80" fill="#a8a8a8"/>
<rect x="840.80" y="574.40" width="1.80" height="1.80" fill="#a8a8a8"/>
<rect x="840.80" y="586.40" width="1.80" height="1.80" fill="#a8a8a8"/>
<rect x="840.80" y="598.40" width="1.80" height="1.80" fill="#a8a8a8"/>
<rect x="840.80" y="610.40" width="1.80" height="1.80" fill="#a8a8a8"/>
<rect x="900.80" y="34.40" width="1.80" height="1.80" fill="#a8a8a8"/>
<rect x="900.80" y="46.40" width="1.80" height="1.80" fill="#a8a8a8"/>
<rect x="900.80" y="58.40" width="1.80" height="1.80" fill="#a8a8a8"/>
<rect x="900.80" y="70.40" width="1.80" height="1.80" fill="#a8a8a8"/>
<rect x="900.80" y="82.40" width="1.80" height="1.80" fill="#a8a8a8"/>
<rect x="900.80" y="94.40" width="1.80" height="1.80" fill="#a8a8a8"/>
<rect x="900.80" y="106.40" width="1.80" height="1.80" fill="#a8a8a8"/>
<rect x="900.80" y="118.40" width="1.80" height="1.80" fill="#a8a8a8"/>
<rect x="900.80" y="130.40" width="1.80" height="1.80" fill="#a8a8a8"/>
<rect x="900.80" y="142.40" width="1.80" height="1.80" fill="#a8a8a8"/>
<rect x="900.80" y="154.40" width="1.80" height="1.80" fill="#a8a8a8"/>
<rect x="900.80" y="166.40" width="1.80" height="1.80" fill="#a8a8a8"/>
<rect x="900.80" y="178.40" width="1.80" height="1.80" fill="#a8a8a8"/>
<rect x="900.80" y="190.40" width="1.80" height="1.80" fill="#a8a8a8"/>
<rect x="900.80" y="202.40" width="1.80" height="1.80" fill="#a8a8a8"/>
<rect x="900.80" y="214.40" width="1.80" height="1.80" fill="#a8a8a8"/>
<rect x="900.80" y="226.40" width="1.80" height="1.80" fill="#a8a8a8"/>
<rect x="900.80" y="238.40" width="1.80" height="1.80" fill="#a8a8a8"/>
<rect x="900.80" y="250.40" width="1.80" height="1.80" fill="#a8a8a8"/>
<rect x="900.80" y="262.40" width="1.80" height="1.80" fill="#a8a8a8"/>
<rect x="900.80" y="274.40" width="1.80" height="1.80" fill="#a8a8a8"/>
<rect x="900.80" y="286.40" width="1.80" height="1.80" fill="#a8a8a8"/>
<rect x="900.80" y="298.40" width="1.80" height="1.80" fill="#a8a8a8"/>
<rect x="900.80" y="310.40" width="1.80" height="1.80" fill="#a8a8a8"/>
<rect x="900.80" y="322.40" width="1.80" height="1.80" fill="#a8a8a8"/>
<rect x="900.80" y="334.40" width="1.80" height="1.80" fill="#a8a8a8"/>
<rect x="900.80" y="346.40" width="1.80" height="1.80" fill="#a8a8a8"/>
<rect x="900.80" y="358.40" width="1.80" height="1.80" fill="#a8a8a8"/>
<rect x="900.80" y="370.40" width="1.80" height="1.80" fill="#a8a8a8"/>
<rect x="900.80" y="382.40" width="1.80" height="1.80" fill="#a8a8a8"/>
<rect x="900.80" y="394.40" width="1.80" height="1.80" fill="#a8a8a8"/>
<rect x="900.80" y="406.40" width="1.80" height="1.80" fill="#a8a8a8"/>
<rect x="900.80" y="418.40" width="1.80" height="1.80" fill="#a8a8a8"/>
<rect x="900.80" y="430.40" width="1.80" height="1.80" fill="#a8a8a8"/>
<rect x="900.80" y="442.40" width="1.80" height="1.80" fill="#a8a8a8"/>
<rect x="900.80" y="454.40" width="1.80" height="1.80" fill="#a8a8a8"/>
<rect x="900.80" y="466.40" width="1.80" height="1.80" fill="#a8a8a8"/>
<rect x="900.80" y="478.40" width="1.80" height="1.80" fill="#a8a8a8"/>
<rect x="900.80" y="490.40" width="1.80" height="1.80" fill="#a8a8a8"/>
<rect x="900.80" y="502.40" width="1.80" height="1.80" fill="#a8a8a8"/>
<rect x="900.80" y="514.40" width="1.80" height="1.80" fill="#a8a8a8"/>
<rect x="900.80" y="526.40" width="1.80" height="1.80" fill="#a8a8a8"/>
<rect x="900.80" y="538.40" width="1.80" height="1.80" fill="#a8a8a8"/>
<rect x="900.80" y="550.40" width="1.80" height="1.80" fill="#a8a8a8"/>
<rect x="900.80" y="562.40" width="1.80" height="1.80" fill="#a8a8a8"/>
<rect x="900.80" y="574.40" width="1.80" height="1.80" fill="#a8a8a8"/>
<rect x="900.80" y="586.40" width="1.80" height="1.80" fill="#a8a8a8"/>
<rect x="900.80" y="598.40" width="1.80" height="1.80" fill="#a8a8a8"/>
<rect x="900.80" y="610.40" width="1.80" height="1.80" fill="#a8a8a8"/>
<rect x="36.80" y="82.40" width="1.80" height="1.80" fill="#a8a8a8"/>
<rect x="48.80" y="82.40" width="1.80" height="1.80" fill="#a8a8a8"/>
<rect x="60.80" y="82.40" width="1.80" height="1.80" fill="#a8a8a8"/>
<rect x="72.80" y="82.40" width="1.80" height="1.80" fill="#a8a8a8"/>
<rect x="84.80" y="82.40" width="1.80" height="1.80" fill="#a8a8a8"/>
<rect x="96.80" y="82.40" width="1.80" height="1.80" fill="#a8a8a8"/>
<rect x="108.80" y="82.40" width="1.80" height="1.80" fill="#a8a8a8"/>
<rect x="120.80" y="82.40" width="1.80" height="1.80" fill="#a8a8a8"/>
<rect x="132.80" y="82.40" width="1.80" height="1.80" fill="#a8a8a8"/>
<rect x="144.80" y="82.40" width="1.80" height="1.80" fill="#a8a8a8"/>
<rect x="156.80" y="82.40" width="1.80" height="1.80" fill="#a8a8a8"/>
<rect x="168.80" y="82.40" width="1.80" height="1.80" fill="#a8a8a8"/>
<rect x="180.80" y="82.40" width="1.80" height="1.80" fill="#a8a8a8"/>
<rect x="192.80" y="82.40" width="1.80" height="1.80" fill="#a8a8a8"/>
<rect x="204.80" y="82.40" width="1.80" height="1.80" fill="#a8a8a8"/>
<rect x="216.80" y="82.40" width="1.80" height="1.80" fill="#a8a8a8"/>
<rect x="228.80" y="82.40" width="1.80" height="1.80" fill="#a8a8a8"/>
<rect x="240.80" y="82.40" width="1.80" height="1.80" fill="#a8a8a8"/>
<rect x="252.80" y="82.40" width="1.80" height="1.80" fill="#a8a8a8"/>
<rect x="264.80" y="82.40" width="1.80" height="1.80" fill="#a8a8a8"/>
<rect x="276.80" y="82.40" width="1.80" height="1.80" fill="#a8a8a8"/>
<rect x="288.80" y="82.40" width="1.80" height="1.80" fill="#a8a8a8"/>
<rect x="300.80" y="82.40" width="1.80" height="1.80" fill="#a8a8a8"/>
<rect x="312.80" y="82.40" width="1.80" height="1.80" fill="#a8a8a8"/>
<rect x="324.80" y="82.40" width="1.80" height="1.80" fill="#a8a8a8"/>
<rect x="336.80" y="82.40" width="1.80" height="1.80" fill="#a8a8a8"/>
<rect x="348.80" y="82.40" width="1.80" height="1.80" fill="#a8a8a8"/>
<rect x="360.80" y="82.40" width="1.80" height="1.80" fill="#a8a8a8"/>
<rect x="372.80" y="82.40" width="1.80" height="1.80" fill="#a8a8a8"/>
<rect x="384.80" y="82.40" width="1.80" height="1.80" fill="#a8a8a8"/>
<rect x="396.80" y="82.40" width="1.80" height="1.80" fill="#a8a8a8"/>
<rect x="408.80" y="82.40" width="1.80" height="1.80" fill="#a8a8a8"/>
<rect x="420.80" y="82.40" width="1.80" height="1.80" fill="#a8a8a8"/>
<rect x="432.80" y="82.40" width="1.80" height="1.80" fill="#a8a8a8"/>
<rect x="444.80" y="82.40" width="1.80" height="1.80" fill="#a8a8a8"/>
<rect x="456.80" y="82.40" width="1.80" height="1.80" fill="#a8a8a8"/>
<rect x="468.80" y="82.40" width="1.80" height="1.80" fill="#a8a8a8"/>
<rect x="480.80" y="82.40" width="1.80" height="1.80" fill="#a8a8a8"/>
<rect x="492.80" y="82.40" width="1.80" height="1.80" fill="#a8a8a8"/>
<rect x="504.80" y="82.40" width="1.80" height="1.80" fill="#a8a8a8"/>
<rect x="516.80" y="82.40" width="1.80" height="1.80" fill="#a8a8a8"/>
<rect x="528.80" y="82.40" width="1.80" height="1.80" fill="#a8a8a8"/>
<rect x="540.80" y="82.40" width="1.80" height="1.80" fill="#a8a8a8"/>
<rect x="552.80" y="82.40" width="1.80" height="1.80" fill="#a8a8a8"/>
<rect x="564.80" y="82.40" width="1.80" height="1.80" fill="#a8a8a8"/>
<rect x="576.80" y="82.40" width="1.80" height="1.80" fill="#a8a8a8"/>
<rect x="588.80" y="82.40" width="1.80" height="1.80" fill="#a8a8a8"/>
<rect x="600.80" y="82.40" width="1.80" height="1.80" fill="#a8a8a8"/>
<rect x="612.80" y="82.40" width="1.80" height="1.80" fill="#a8a8a8"/>
<rect x="624.80" y="82.40" width="1.80" height="1.80" fill="#a8a8a8"/>
<rect x="636.80" y="82.40" width="1.80" height="1.80" fill="#a8a8a8"/>
<rect x="648.80" y="82.40" width="1.80" height="1.80" fill="#a8a8a8"/>
<rect x="660.80" y="82.40" width="1.80" height="1.80" fill="#a8a8a8"/>
<rect x="672.80" y="82.40" width="1.80" height="1.80" fill="#a8a8a8"/>
<rect x="684.80" y="82.40" width="1.80" height="1.80" fill="#a8a8a8"/>
<rect x="696.80" y="82.40" width="1.80" height="1.80" fill="#a8a8a8"/>
<rect x="708.80" y="82.40" width="1.80" height="1.80" fill="#a8a8a8"/>
<rect x="720.80" y="82.40" width="1.80" height="1.80" fill="#a8a8a8"/>
<rect x="732.80" y="82.40" width="1.80" height="1.80" fill="#a8a8a8"/>
<rect x="744.80" y="82.40" width="1.80" height="1.80" fill="#a8a8a8"/>
<rect x="756.80" y="82.40" width="1.80" height="1.80" fill="#a8a8a8"/>
<rect x="768.80" y="82.40" width="1.80" height="1.80" fill="#a8a8a8"/>
<rect x="780.80" y="82.40" width="1.80" height="1.80" fill="#a8a8a8"/>
<rect x="792.80" y="82.40" width="1.80" height="1.80" fill="#a8a8a8"/>
<rect x="804.80" y="82.40" width="1.80" height="1.80" fill="#a8a8a8"/>
<rect x="816.80" y="82.40" width="1.80" height="1.80" fill="#a8a8a8"/>
<rect x="828.80" y="82.40" width="1.80" height="1.80" fill="#a8a8a8"/>
<rect x="840.80" y="82.40" width="1.80" height="1.80" fill="#a8a8a8"/>
<rect x="852.80" y="82.40" width="1.80" height="1.80" fill="#a8a8a8"/>
<rect x="864.80" y="82.40" width="1.80" height="1.80" fill="#a8a8a8"/>
<rect x="876.80" y="82.40" width="1.80" height="1.80" fill="#a8a8a8"/>
<rect x="888.80" y="82.40" width="1.80" height="1.80" fill="#a8a8a8"/>
<rect x="900.80" y="82.40" width="1.80" height="1.80" fill="#a8a8a8"/>
<rect x="912.80" y="82.40" width="1.80" height="1.80" fill="#a8a8a8"/>
<rect x="924.80" y="82.40" width="1.80" height="1.80" fill="#a8a8a8"/>
<rect x="36.80" y="142.40" width="1.80" height="1.80" fill="#a8a8a8"/>
<rect x="48.80" y="142.40" width="1.80" height="1.80" fill="#a8a8a8"/>
<rect x="60.80" y="142.40" width="1.80" height="1.80" fill="#a8a8a8"/>
<rect x="72.80" y="142.40" width="1.80" height="1.80" fill="#a8a8a8"/>
<rect x="84.80" y="142.40" width="1.80" height="1.80" fill="#a8a8a8"/>
<rect x="96.80" y="142.40" width="1.80" height="1.80" fill="#a8a8a8"/>
<rect x="108.80" y="142.40" width="1.80" height="1.80" fill="#a8a8a8"/>
<rect x="120.80" y="142.40" width="1.80" height="1.80" fill="#a8a8a8"/>
<rect x="132.80" y="142.40" width="1.80" height="1.80" fill="#a8a8a8"/>
<rect x="144.80" y="142.40" width="1.80" height="1.80" fill="#a8a8a8"/>
<rect x="156.80" y="142.40" width="1.80" height="1.80" fill="#a8a8a8"/>
<rect x="168.80" y="142.40" width="1.80" height="1.80" fill="#a8a8a8"/>
<rect x="180.80" y="142.40" width="1.80" height="1.80" fill="#a8a8a8"/>
<rect x="192.80" y="142.40" width="1.80" height="1.80" fill="#a8a8a8"/>
<rect x="204.80" y="142.40" width="1.80" height="1.80" fill="#a8a8a8"/>
<rect x="216.80" y="142.40" width="1.80" height="1.80" fill="#a8a8a8"/>
<rect x="228.80" y="142.40" width="1.80" height="1.80" fill="#a8a8a8"/>
<rect x="240.80" y="142.40" width="1.80" height="1.80" fill="#a8a8a8"/>
<rect x="252.80" y="142.40" width="1.80" height="1.80" fill="#a8a8a8"/>
<rect x="264.80" y="142.40" width="1.80" height="1.80" fill="#a8a8a8"/>
<rect x="276.80" y="142.40" width="1.80" height="1.80" fill="#a8a8a8"/>
<rect x="288.80" y="142.40" width="1.80" height="1.80" fill="#a8a8a8"/>
<rect x="300.80" y="142.40" width="1.80" height="1.80" fill="#a8a8a8"/>
<rect x="312.80" y="142.40" width="1.80" height="1.80" fill="#a8a8a8"/>
<rect x="324.80" y="142.40" width="1.80" height="1.80" fill="#a8a8a8"/>
<rect x="336.80" y="142.40" width="1.80" height="1.80" fill="#a8a8a8"/>
<rect x="348.80" y="142.40" width="1.80" height="1.80" fill="#a8a8a8"/>
<rect x="360.80" y="142.40" width="1.80" height="1.80" fill="#a8a8a8"/>
<rect x="372.80" y="142.40" width="1.80" height="1.80" fill="#a8a8a8"/>
<rect x="384.80" y="142.40" width="1.80" height="1.80" fill="#a8a8a8"/>
<rect x="396.80" y="142.40" width="1.80" height="1.80" fill="#a8a8a8"/>
<rect x="408.80" y="142.40" width="1.80" height="1.80" fill="#a8a8a8"/>
<rect x="420.80" y="142.40" width="1.80" height="1.80" fill="#a8a8a8"/>
<rect x="432.80" y="142.40" width="1.80" height="1.80" fill="#a8a8a8"/>
<rect x="444.80" y="142.40" width="1.80" height="1.80" fill="#a8a8a8"/>
<rect x="456.80" y="142.40" width="1.80" height="1.80" fill="#a8a8a8"/>
<rect x="468.80" y="142.40" width="1.80" height="1.80" fill="#a8a8a8"/>
<rect x="480.80" y="142.40" width="1.80" height="1.80" fill="#a8a8a8"/>
<rect x="492.80" y="142.40" width="1.80" height="1.80" fill="#a8a8a8"/>
<rect x="504.80" y="142.40" width="1.80" height="1.80" fill="#a8a8a8"/>
<rect x="516.80" y="142.40" width="1.80" height="1.80" fill="#a8a8a8"/>
<rect x="528.80" y="142.40" width="1.80" height="1.80" fill="#a8a8a8"/>
<rect x="540.80" y="142.40" width="1.80" height="1.80" fill="#a8a8a8"/>
<rect x="552.80" y="142.40" width="1.80" height="1.80" fill="#a8a8a8"/>
<rect x="564.80" y="142.40" width="1.80" height="1.80" fill="#a8a8a8"/>
<rect x="576.80" y="142.40" width="1.80" height="1.80" fill="#a8a8a8"/>
<rect x="588.80" y="142.40" width="1.80" height="1.80" fill="#a8a8a8"/>
<rect x="600.80" y="142.40" width="1.80" height="1.80" fill="#a8a8a8"/>
<rect x="612.80" y="142.40" width="1.80" height="1.80" fill="#a8a8a8"/>
<rect x="624.80" y="142.40" width="1.80" height="1.80" fill="#a8a8a8"/>
<rect x="636.80" y="142.40" width="1.80" height="1.80" fill="#a8a8a8"/>
<rect x="648.80" y="142.40" width="1.80" height="1.80" fill="#a8a8a8"/>
<rect x="660.80" y="142.40" width="1.80" height="1.80" fill="#a8a8a8"/>
<rect x="672.80" y="142.40" width="1.80" height="1.80" fill="#a8a8a8"/>
<rect x="684.80" y="142.40" width="1.80" height="1.80" fill="#a8a8a8"/>
<rect x="696.80" y="142.40" width="1.80" height="1.80" fill="#a8a8a8"/>
<rect x="708.80" y="142.40" width="1.80" height="1.80" fill="#a8a8a8"/>
<rect x="720.80" y="142.40" width="1.80" height="1.80" fill="#a8a8a8"/>
<rect x="732.80" y="142.40" width="1.80" height="1.80" fill="#a8a8a8"/>
<rect x="744.80" y="142.40" width="1.80" height="1.80" fill="#a8a8a8"/>
<rect x="756.80" y="142.40" width="1.80" height="1.80" fill="#a8a8a8"/>
<rect x="768.80" y="142.40" width="1.80" height="1.80" fill="#a8a8a8"/>
<rect x="780.80" y="142.40" width="1.80" height="1.80" fill="#a8a8a8"/>
<rect x="792.80" y="142.40" width="1.80" height="1.80" fill="#a8a8a8"/>
<rect x="804.80" y="142.40" width="1.80" height="1.80" fill="#a8a8a8"/>
<rect x="816.80" y="142.40" width="1.80" height="1.80" fill="#a8a8a8"/>
<rect x="828.80" y="142.40" width="1.80" height="1.80" fill="#a8a8a8"/>
<rect x="840.80" y="142.40" width="1.80" height="1.80" fill="#a8a8a8"/>
<rect x="852.80" y="142.40" width="1.80" height="1.80" fill="#a8a8a8"/>
<rect x="864.80" y="142.40" width="1.80" height="1.80" fill="#a8a8a8"/>
<rect x="876.80" y="142.40" width="1.80" height="1.80" fill="#a8a8a8"/>
<rect x="888.80" y="142.40" width="1.80" height="1.80" fill="#a8a8a8"/>
<rect x="900.80" y="142.40" width="1.80" height="1.80" fill="#a8a8a8"/>
<rect x="912.80" y="142.40" width="1.80" height="1.80" fill="#a8a8a8"/>
<rect x="924.80" y="142.40" width="1.80" height="1.80" fill="#a8a8a8"/>
<rect x="36.80" y="202.40" width="1.80" height="1.80" fill="#a8a8a8"/>
<rect x="48.80" y="202.40" width="1.80" height="1.80" fill="#a8a8a8"/>
<rect x="60.80" y="202.40" width="1.80" height="1.80" fill="#a8a8a8"/>
<rect x="72.80" y="202.40" width="1.80" height="1.80" fill="#a8a8a8"/>
<rect x="84.80" y="202.40" width="1.80" height="1.80" fill="#a8a8a8"/>
<rect x="96.80" y="202.40" width="1.80" height="1.80" fill="#a8a8a8"/>
<rect x="108.80" y="202.40" width="1.80" height="1.80" fill="#a8a8a8"/>
<rect x="120.80" y="202.40" width="1.80" height="1.80" fill="#a8a8a8"/>
<rect x="132.80" y="202.40" width="1.80" height="1.80" fill="#a8a8a8"/>
<rect x="144.80" y="202.40" width="1.80" height="1.80" fill="#a8a8a8"/>
<rect x="156.80" y="202.40" width="1.80" height="1.80" fill="#a8a8a8"/>
<rect x="168.80" y="202.40" width="1.80" height="1.80" fill="#a8a8a8"/>
<rect x="180.80" y="202.40" width="1.80" height="1.80" fill="#a8a8a8"/>
<rect x="192.80" y="202.40" width="1.80" height="1.80" fill="#a8a8a8"/>
<rect x="204.80" y="202.40" width="1.80" height="1.80" fill="#a8a8a8"/>
<rect x="216.80" y="202.40" width="1.80" height="1.80" fill="#a8a8a8"/>
<rect x="228.80" y="202.40" width="1.80" height="1.80" fill="#a8a8a8"/>
<rect x="240.80" y="202.40" width="1.80" height="1.80" fill="#a8a8a8"/>
<rect x="252.80" y="202.40" width="1.80" height="1.80" fill="#a8a8a8"/>
<rect x="264.80" y="202.40" width="1.80" height="1.80" fill="#a8a8a8"/>
<rect x="276.80" y="202.40" width="1.80" height="1.80" fill="#a8a8a8"/>
<rect x="288.80" y="202.40" width="1.80" height="1.80" fill="#a8a8a8"/>
<rect x="300.80" y="202.40" width="1.80" height="1.80" fill="#a8a8a8"/>
<rect x="312.80" y="202.40" width="1.80" height="1.80" fill="#a8a8a8"/>
<rect x="324.80" y="202.40" width="1.80" height="1.80" fill="#a8a8a8"/>
<rect x="336.80" y="202.40" width="1.80" height="1.80" fill="#a8a8a8"/>
<rect x="348.80" y="202.40" width="1.80" height="1.80" fill="#a8a8a8"/>
<rect x="360.80" y="202.40" width="1.80" height="1.80" fill="#a8a8a8"/>
<rect x="372.80" y="202.40" width="1.80" height="1.80" fill="#a8a8a8"/>
<rect x="384.80" y="202.40" width="1.80" height="1.80" fill="#a8a8a8"/>
<rect x="396.80" y="202.40" width="1.80" height="1.80" fill="#a8a8a8"/>
<rect x="408.80" y="202.40" width="1.80" height="1.80" fill="#a8a8a8"/>
<rect x="420.80" y="202.40" width="1.80" height="1.80" fill="#a8a8a8"/>
<rect x="432.80" y="202.40" width="1.80" height="1.80" fill="#a8a8a8"/>
<rect x="444.80" y="202.40" width="1.80" height="1.80" fill="#a8a8a8"/>
<rect x="456.80" y="202.40" width="1.80" height="1.80" fill="#a8a8a8"/>
<rect x="468.80" y="202.40" width="1.80" height="1.80" fill="#a8a8a8"/>
<rect x="480.80" y="202.40" width="1.80" height="1.80" fill="#a8a8a8"/>
<rect x="492.80" y="202.40" width="1.80" height="1.80" fill="#a8a8a8"/>
<rect x="504.80" y="202.40" width="1.80" height="1.80" fill="#a8a8a8"/>
<rect x="516.80" y="202.40" width="1.80" height="1.80" fill="#a8a8a8"/>
<rect x="528.80" y="202.40" width="1.80" height="1.80" fill="#a8a8a8"/>
<rect x="540.80" y="202.40" width="1.80" height="1.80" fill="#a8a8a8"/>
<rect x="552.80" y="202.40" width="1.80" height="1.80" fill="#a8a8a8"/>
<rect x="564.80" y="202.40" width="1.80" height="1.80" fill="#a8a8a8"/>
<rect x="576.80" y="202.40" width="1.80" height="1.80" fill="#a8a8a8"/>
<rect x="588.80" y="202.40" width="1.80" height="1.80" fill="#a8a8a8"/>
<rect x="600.80" y="202.40" width="1.80" height="1.80" fill="#a8a8a8"/>
<rect x="612.80" y="202.40" width="1.80" height="1.80" fill="#a8a8a8"/>
<rect x="624.80" y="202.40" width="1.80" height="1.80" fill="#a8a8a8"/>
<rect x="636.80" y="202.40" width="1.80" height="1.80" fill="#a8a8a8"/>
<rect x="648.80" y="202.40" width="1.80" height="1.80" fill="#a8a8a8"/>
<rect x="660.80" y="202.40" width="1.80" height="1.80" fill="#a8a8a8"/>
<rect x="672.80" y="202.40" width="1.80" height="1.80" fill="#a8a8a8"/>
<rect x="684.80" y="202.40" width="1.80" height="1.80" fill="#a8a8a8"/>
<rect x="696.80" y="202.40" width="1.80" height="1.80" fill="#a8a8a8"/>
<rect x="708.80" y="202.40" width="1.80" height="1.80" fill="#a8a8a8"/>
<rect x="720.80" y="202.40" width="1.80" height="1.80" fill="#a8a8a8"/>
<rect x="732.80" y="202.40" width="1.80" height="1.80" fill="#a8a8a8"/>
<rect x="744.80" y="202.40" width="1.80" height="1.80" fill="#a8a8a8"/>
<rect x="756.80" y="202.40" width="1.80" height="1.80" fill="#a8a8a8"/>
<rect x="768.80" y="202.40" width="1.80" height="1.80" fill="#a8a8a8"/>
<rect x="780.80" y="202.40" width="1.80" height="1.80" fill="#a8a8a8"/>
<rect x="792.80" y="202.40" width="1.80" height="1.80" fill="#a8a8a8"/>
<rect x="804.80" y="202.40" width="1.80" height="1.80" fill="#a8a8a8"/>
<rect x="816.80" y="202.40" width="1.80" height="1.80" fill="#a8a8a8"/>
<rect x="828.80" y="202.40" width="1.80" height="1.80" fill="#a8a8a8"/>
<rect x="840.80" y="202.40" width="1.80" height="1.80" fill="#a8a8a8"/>
<rect x="852.80" y="202.40" width="1.80" height="1.80" fill="#a8a8a8"/>
<rect x="864.80" y="202.40" width="1.80" height="1.80" fill="#a8a8a8"/>
<rect x="876.80" y="202.40" width="1.80" height="1.80" fill="#a8a8a8"/>
<rect x="888.80" y="202.40" width="1.80" height="1.80" fill="#a8a8a8"/>
<rect x="900.80" y="202.40" width="1.80" height="1.80" fill="#a8a8a8"/>
<rect x="912.80" y="202.40" width="1.80" height="1.80" fill="#a8a8a8"/>
<rect x="924.80" y="202.40" width="1.80" height="1.80" fill="#a8a8a8"/>
<rect x="36.80" y="262.40" width="1.80" height="1.80" fill="#a8a8a8"/>
<rect x="48.80" y="262.40" width="1.80" height="1.80" fill="#a8a8a8"/>
<rect x="60.80" y="262.40" width="1.80" height="1.80" fill="#a8a8a8"/>
<rect x="72.80" y="262.40" width="1.80" height="1.80" fill="#a8a8a8"/>
<rect x="84.80" y="262.40" width="1.80" height="1.80" fill="#a8a8a8"/>
<rect x="96.80" y="262.40" width="1.80" height="1.80" fill="#a8a8a8"/>
<rect x="108.80" y="262.40" width="1.80" height="1.80" fill="#a8a8a8"/>
<rect x="120.80" y="262.40" width="1.80" height="1.80" fill="#a8a8a8"/>
<rect x="132.80" y="262.40" width="1.80" height="1.80" fill="#a8a8a8"/>
<rect x="144.80" y="262.40" width="1.80" height="1.80" fill="#a8a8a8"/>
<rect x="156.80" y="262.40" width="1.80" height="1.80" fill="#a8a8a8"/>
<rect x="168.80" y="262.40" width="1.80" height="1.80" fill="#a8a8a8"/>
<rect x="180.80" y="262.40" width="1.80" height="1.80" fill="#a8a8a8"/>
<rect x="192.80" y="262.40" width="1.80" height="1.80" fill="#a8a8a8"/>
<rect x="204.80" y="262.40" width="1.80" height="1.80" fill="#a8a8a8"/>
<rect x="216.80" y="262.40" width="1.80" height="1.80" fill="#a8a8a8"/>
<rect x="228.80" y="262.40" width="1.80" height="1.80" fill="#a8a8a8"/>
<rect x="240.80" y="262.40" width="1.80" height="1.80" fill="#a8a8a8"/>
<rect x="252.80" y="262.40" width="1.80" height="1.80" fill="#a8a8a8"/>
<rect x="264.80" y="262.40" width="1.80" height="1.80" fill="#a8a8a8"/>
<rect x="276.80" y="262.40" width="1.80" height="1.80" fill="#a8a8a8"/>
<rect x="288.80" y="262.40" width="1.80" height="1.80" fill="#a8a8a8"/>
<rect x="300.80" y="262.40" width="1.80" height="1.80" fill="#a8a8a8"/>
<rect x="312.80" y="262.40" width="1.80" height="1.80" fill="#a8a8a8"/>
<rect x="324.80" y="262.40" width="1.80" height="1.80" fill="#a8a8a8"/>
<rect x="336.80" y="262.40" width="1.80" height="1.80" fill="#a8a8a8"/>
<rect x="348.80" y="262.40" width="1.80" height="1.80" fill="#a8a8a8"/>
<rect x="360.80" y="262.40" width="1.80" height="1.80" fill="#a8a8a8"/>
<rect x="372.80" y="262.40" width="1.80" height="1.80" fill="#a8a8a8"/>
<rect x="384.80" y="262.40" width="1.80" height="1.80" fill="#a8a8a8"/>
<rect x="396.80" y="262.40" width="1.80" height="1.80" fill="#a8a8a8"/>
<rect x="408.80" y="262.40" width="1.80" height="1.80" fill="#a8a8a8"/>
<rect x="420.80" y="262.40" width="1.80" height="1.80" fill="#a8a8a8"/>
<rect x="432.80" y="262.40" width="1.80" height="1.80" fill="#a8a8a8"/>
<rect x="444.80" y="262.40" width="1.80" height="1.80" fill="#a8a8a8"/>
<rect x="456.80" y="262.40" width="1.80" height="1.80" fill="#a8a8a8"/>
<rect x="468.80" y="262.40" width="1.80" height="1.80" fill="#a8a8a8"/>
<rect x="480.80" y="262.40" width="1.80" height="1.80" fill="#a8a8a8"/>
<rect x="492.80" y="262.40" width="1.80" height="1.80" fill="#a8a8a8"/>
<rect x="504.80" y="262.40" width="1.80" height="1.80" fill="#a8a8a8"/>
<rect x="516.80" y="262.40" width="1.80" height="1.80" fill="#a8a8a8"/>
<rect x="528.80" y="262.40" width="1.80" height="1.80" fill="#a8a8a8"/>
<rect x="540.80" y="262.40" width="1.80" height="1.80" fill="#a8a8a8"/>
<rect x="552.80" y="262.40" width="1.80" height="1.80" fill="#a8a8a8"/>
<rect x="564.80" y="262.40" width="1.80" height="1.80" fill="#a8a8a8"/>
<rect x="576.80" y="262.40" width="1.80" height="1.80" fill="#a8a8a8"/>
<rect x="588.80" y="262.40" width="1.80" height="1.80" fill="#a8a8a8"/>
<rect x="600.80" y="262.40" width="1.80" height="1.80" fill="#a8a8a8"/>
<rect x="612.80" y="262.40" width="1.80" height="1.80" fill="#a8a8a8"/>
<rect x="624.80" y="262.40" width="1.80" height="1.80" fill="#a8a8a8"/>
<rect x="636.80" y="262.40" width="1.80" height="1.80" fill="#a8a8a8"/>
<rect x="648.80" y="262.40" width="1.80" height="1.80" fill="#a8a8a8"/>
<rect x="660.80" y="262.40" width="1.80" height="1.80" fill="#a8a8a8"/>
<rect x="672.80" y="262.40" width="1.80" height="1.80" fill="#a8a8a8"/>
<rect x="684.80" y="262.40" width="1.80" height="1.80" fill="#a8a8a8"/>
<rect x="696.80" y="262.40" width="1.80" height="1.80" fill="#a8a8a8"/>
<rect x="708.80" y="262.40" width="1.80" height="1.80" fill="#a8a8a8"/>
<rect x="720.80" y="262.40" width="1.80" height="1.80" fill="#a8a8a8"/>
<rect x="732.80" y="262.40" width="1.80" height="1.80" fill="#a8a8a8"/>
<rect x="744.80" y="262.40" width="1.80" height="1.80" fill="#a8a8a8"/>
<rect x="756.80" y="262.40" width="1.80" height="1.80" fill="#a8a8a8"/>
<rect x="768.80" y="262.40" width="1.80" height="1.80" fill="#a8a8a8"/>
<rect x="780.80" y="262.40" width="1.80" height="1.80" fill="#a8a8a8"/>
<rect x="792.80" y="262.40" width="1.80" height="1.80" fill="#a8a8a8"/>
<rect x="804.80" y="262.40" width="1.80" height="1.80" fill="#a8a8a8"/>
<rect x="816.80" y="262.40" width="1.80" height="1.80" fill="#a8a8a8"/>
<rect x="828.80" y="262.40" width="1.80" height="1.80" fill="#a8a8a8"/>
<rect x="840.80" y="262.40" width="1.80" height="1.80" fill="#a8a8a8"/>
<rect x="852.80" y="262.40" width="1.80" height="1.80" fill="#a8a8a8"/>
<rect x="864.80" y="262.40" width="1.80" height="1.80" fill="#a8a8a8"/>
<rect x="876.80" y="262.40" width="1.80" height="1.80" fill="#a8a8a8"/>
<rect x="888.80" y="262.40" width="1.80" height="1.80" fill="#a8a8a8"/>
<rect x="900.80" y="262.40" width="1.80" height="1.80" fill="#a8a8a8"/>
<rect x="912.80" y="262.40" width="1.80" height="1.80" fill="#a8a8a8"/>
<rect x="924.80" y="262.40" width="1.80" height="1.80" fill="#a8a8a8"/>
<rect x="36.80" y="382.40" width="1.80" height="1.80" fill="#a8a8a8"/>
<rect x="48.80" y="382.40" width="1.80" height="1.80" fill="#a8a8a8"/>
<rect x="60.80" y="382.40" width="1.80" height="1.80" fill="#a8a8a8"/>
<rect x="72.80" y="382.40" width="1.80" height="1.80" fill="#a8a8a8"/>
<rect x="84.80" y="382.40" width="1.80" height="1.80" fill="#a8a8a8"/>
<rect x="96.80" y="382.40" width="1.80" height="1.80" fill="#a8a8a8"/>
<rect x="108.80" y="382.40" width="1.80" height="1.80" fill="#a8a8a8"/>
<rect x="120.80" y="382.40" width="1.80" height="1.80" fill="#a8a8a8"/>
<rect x="132.80" y="382.40" width="1.80" height="1.80" fill="#a8a8a8"/>
<rect x="144.80" y="382.40" width="1.80" height="1.80" fill="#a8a8a8"/>
<rect x="156.80" y="382.40" width="1.80" height="1.80" fill="#a8a8a8"/>
<rect x="168.80" y="382.40" width="1.80" height="1.80" fill="#a8a8a8"/>
<rect x="180.80" y="382.40" width="1.80" height="1.80" fill="#a8a8a8"/>
<rect x="192.80" y="382.40" width="1.80" height="1.80" fill="#a8a8a8"/>
<rect x="204.80" y="382.40" width="1.80" height="1.80" fill="#a8a8a8"/>
<rect x="216.80" y="382.40" width="1.80" height="1.80" fill="#a8a8a8"/>
<rect x="228.80" y="382.40" width="1.80" height="1.80" fill="#a8a8a8"/>
<rect x="240.80" y="382.40" width="1.80" height="1.80" fill="#a8a8a8"/>
<rect x="252.80" y="382.40" width="1.80" height="1.80" fill="#a8a8a8"/>
<rect x="264.80" y="382.40" width="1.80" height="1.80" fill="#a8a8a8"/>
<rect x="276.80" y="382.40" width="1.80" height="1.80" fill="#a8a8a8"/>
<rect x="288.80" y="382.40" width="1.80" height="1.80" fill="#a8a8a8"/>
<rect x="300.80" y="382.40" width="1.80" height="1.80" fill="#a8a8a8"/>
<rect x="312.80" y="382.40" width="1.80" height="1.80" fill="#a8a8a8"/>
<rect x="324.80" y="382.40" width="1.80" height="1.80" fill="#a8a8a8"/>
<rect x="336.80" y="382.40" width="1.80" height="1.80" fill="#a8a8a8"/>
<rect x="348.80" y="382.40" width="1.80" height="1.80" fill="#a8a8a8"/>
<rect x="360.80" y="382.40" width="1.80" height="1.80" fill="#a8a8a8"/>
<rect x="372.80" y="382.40" width="1.80" height="1.80" fill="#a8a8a8"/>
<rect x="384.80" y="382.40" width="1.80" height="1.80" fill="#a8a8a8"/>
<rect x="396.80" y="382.40" width="1.80" height="1.80" fill="#a8a8a8"/>
<rect x="408.80" y="382.40" width="1.80" height="1.80" fill="#a8a8a8"/>
<rect x="420.80" y="382.40" width="1.80" height="1.80" fill="#a8a8a8"/>
<rect x="432.80" y="382.40" width="1.80" height="1.80" fill="#a8a8a8"/>
<rect x="444.80" y="382.40" width="1.80" height="1.80" fill="#a8a8a8"/>
<rect x="456.80" y="382.40" width="1.80" height="1.80" fill="#a8a8a8"/>
<rect x="468.80" y="382.40" width="1.80" height="1.80" fill="#a8a8a8"/>
<rect x="480.80" y="382.40" width="1.80" height="1.80" fill="#a8a8a8"/>
<rect x="492.80" y="382.40" width="1.80" height="1.80" fill="#a8a8a8"/>
<rect x="504.80" y="382.40" width="1.80" height="1.80" fill="#a8a8a8"/>
<rect x="516.80" y="382.40" width="1.80" height="1.80" fill="#a8a8a8"/>
<rect x="528.80" y="382.40" width="1.80" height="1.80" fill="#a8a8a8"/>
<rect x="540.80" y="382.40" width="1.80" height="1.80" fill="#a8a8a8"/>
<rect x="552.80" y="382.40" width="1.80" height="1.80" fill="#a8a8a8"/>
<rect x="564.80" y="382.40" width="1.80" height="1.80" fill="#a8a8a8"/>
<rect x="576.80" y="382.40" width="1.80" height="1.80" fill="#a8a8a8"/>
<rect x="588.80" y="382.40" width="1.80" height="1.80" fill="#a8a8a8"/>
<rect x="600.80" y="382.40" width="1.80" height="1.80" fill="#a8a8a8"/>
<rect x="612.80" y="382.40" width="1.80" height="1.80" fill="#a8a8a8"/>
<rect x="624.80" y="382.40" width="1.80" height="1.80" fill="#a8a8a8"/>
<rect x="636.80" y="382.40" width="1.80" height="1.80" fill="#a8a8a8"/>
<rect x="648.80" y="382.40" width="1.80" height="1.80" fill="#a8a8a8"/>
<rect x="660.80" y="382.40" width="1.80" height="1.80" fill="#a8a8a8"/>
<rect x="672.80" y="382.40" width="1.80" height="1.80" fill="#a8a8a8"/>
<rect x="684.80" y="382.40" width="1.80" height="1.80" fill="#a8a8a8"/>
<rect x="696.80" y="382.40" width="1.80" height="1.80" fill="#a8a8a8"/>
<rect x="708.80" y="382.40" width="1.80" height="1.80" fill="#a8a8a8"/>
<rect x="720.80" y="382.40" width="1.80" height="1.80" fill="#a8a8a8"/>
<rect x="732.80" y="382.40" width="1.80" height="1.80" fill="#a8a8a8"/>
<rect x="744.80" y="382.40" width="1.80" height="1.80" fill="#a8a8a8"/>
<rect x="756.80" y="382.40" width="1.80" height="1.80" fill="#a8a8a8"/>
<rect x="768.80" y="382.40" width="1.80" height="1.80" fill="#a8a8a8"/>
<rect x="780.80" y="382.40" width="1.80" height="1.80" fill="#a8a8a8"/>
<rect x="792.80" y="382.40" width="1.80" height="1.80" fill="#a8a8a8"/>
<rect x="804.80" y="382.40" width="1.80" height="1.80" fill="#a8a8a8"/>
<rect x="816.80" y="382.40" width="1.80" height="1.80" fill="#a8a8a8"/>
<rect x="828.80" y="382.40" width="1.80" height="1.80" fill="#a8a8a8"/>
<rect x="840.80" y="382.40" width="1.80" height="1.80" fill="#a8a8a8"/>
<rect x="852.80" y="382.40" width="1.80" height="1.80" fill="#a8a8a8"/>
<rect x="864.80" y="382.40" width="1.80" height="1.80" fill="#a8a8a8"/>
<rect x="876.80" y="382.40" width="1.80" height="1.80" fill="#a8a8a8"/>
<rect x="888.80" y="382.40" width="1.80" height="1.80" fill="#a8a8a8"/>
<rect x="900.80" y="382.40" width="1.80" height="1.80" fill="#a8a8a8"/>
<rect x="912.80" y="382.40" width="1.80" height="1.80" fill="#a8a8a8"/>
<rect x="924.80" y="382.40" width="1.80" height="1.80" fill="#a8a8a8"/>
<rect x="36.80" y="442.40" width="1.80" height="1.80" fill="#a8a8a8"/>
<rect x="48.80" y="442.40" width="1.80" height="1.80" fill="#a8a8a8"/>
<rect x="60.80" y="442.40" width="1.80" height="1.80" fill="#a8a8a8"/>
<rect x="72.80" y="442.40" width="1.80" height="1.80" fill="#a8a8a8"/>
<rect x="84.80" y="442.40" width="1.80" height="1.80" fill="#a8a8a8"/>
<rect x="96.80" y="442.40" width="1.80" height="1.80" fill="#a8a8a8"/>
<rect x="108.80" y="442.40" width="1.80" height="1.80" fill="#a8a8a8"/>
<rect x="120.80" y="442.40" width="1.80" height="1.80" fill="#a8a8a8"/>
<rect x="132.80" y="442.40" width="1.80" height="1.80" fill="#a8a8a8"/>
<rect x="144.80" y="442.40" width="1.80" height="1.80" fill="#a8a8a8"/>
<rect x="156.80" y="442.40" width="1.80" height="1.80" fill="#a8a8a8"/>
<rect x="168.80" y="442.40" width="1.80" height="1.80" fill="#a8a8a8"/>
<rect x="180.80" y="442.40" width="1.80" height="1.80" fill="#a8a8a8"/>
<rect x="192.80" y="442.40" width="1.80" height="1.80" fill="#a8a8a8"/>
<rect x="204.80" y="442.40" width="1.80" height="1.80" fill="#a8a8a8"/>
<rect x="216.80" y="442.40" width="1.80" height="1.80" fill="#a8a8a8"/>
<rect x="228.80" y="442.40" width="1.80" height="1.80" fill="#a8a8a8"/>
<rect x="240.80" y="442.40" width="1.80" height="1.80" fill="#a8a8a8"/>
<rect x="252.80" y="442.40" width="1.80" height="1.80" fill="#a8a8a8"/>
<rect x="264.80" y="442.40" width="1.80" height="1.80" fill="#a8a8a8"/>
<rect x="276.80" y="442.40" width="1.80" height="1.80" fill="#a8a8a8"/>
<rect x="288.80" y="442.40" width="1.80" height="1.80" fill="#a8a8a8"/>
<rect x="300.80" y="442.40" width="1.80" height="1.80" fill="#a8a8a8"/>
<rect x="312.80" y="442.40" width="1.80" height="1.80" fill="#a8a8a8"/>
<rect x="324.80" y="442.40" width="1.80" height="1.80" fill="#a8a8a8"/>
<rect x="336.80" y="442.40" width="1.80" height="1.80" fill="#a8a8a8"/>
<rect x="348.80" y="442.40" width="1.80" height="1.80" fill="#a8a8a8"/>
<rect x="360.80" y="442.40" width="1.80" height="1.80" fill="#a8a8a8"/>
<rect x="372.80" y="442.40" width="1.80" height="1.80" fill="#a8a8a8"/>
<rect x="384.80" y="442.40" width="1.80" height="1.80" fill="#a8a8a8"/>
<rect x="396.80" y="442.40" width="1.80" height="1.80" fill="#a8a8a8"/>
<rect x="408.80" y="442.40" width="1.80" height="1.80" fill="#a8a8a8"/>
<rect x="420.80" y="442.40" width="1.80" height="1.80" fill="#a8a8a8"/>
<rect x="432.80" y="442.40" width="1.80" height="1.80" fill="#a8a8a8"/>
<rect x="444.80" y="442.40" width="1.80" height="1.80" fill="#a8a8a8"/>
<rect x="456.80" y="442.40" width="1.80" height="1.80" fill="#a8a8a8"/>
<rect x="468.80" y="442.40" width="1.80" height="1.80" fill="#a8a8a8"/>
<rect x="480.80" y="442.40" width="1.80" height="1.80" fill="#a8a8a8"/>
<rect x="492.80" y="442.40" width="1.80" height="1.80" fill="#a8a8a8"/>
<rect x="504.80" y="442.40" width="1.80" height="1.80" fill="#a8a8a8"/>
<rect x="516.80" y="442.40" width="1.80" height="1.80" fill="#a8a8a8"/>
<rect x="528.80" y="442.40" width="1.80" height="1.80" fill="#a8a8a8"/>
<rect x="540.80" y="442.40" width="1.80" height="1.80" fill="#a8a8a8"/>
<rect x="552.80" y="442.40" width="1.80" height="1.80" fill="#a8a8a8"/>
<rect x="564.80" y="442.40" width="1.80" height="1.80" fill="#a8a8a8"/>
<rect x="576.80" y="442.40" width="1.80" height="1.80" fill="#a8a8a8"/>
<rect x="588.80" y="442.40" width="1.80" height="1.80" fill="#a8a8a8"/>
<rect x="600.80" y="442.40" width="1.80" height="1.80" fill="#a8a8a8"/>
<rect x="612.80" y="442.40" width="1.80" height="1.80" fill="#a8a8a8"/>
<rect x="624.80" y="442.40" width="1.80" height="1.80" fill="#a8a8a8"/>
<rect x="636.80" y="442.40" width="1.80" height="1.80" fill="#a8a8a8"/>
<rect x="648.80" y="442.40" width="1.80" height="1.80" fill="#a8a8a8"/>
<rect x="660.80" y="442.40" width="1.80" height="1.80" fill="#a8a8a8"/>
<rect x="672.80" y="442.40" width="1.80" height="1.80" fill="#a8a8a8"/>
<rect x="684.80" y="442.40" width="1.80" height="1.80" fill="#a8a8a8"/>
<rect x="696.80" y="442.40" width="1.80" height="1.80" fill="#a8a8a8"/>
<rect x="708.80" y="442.40" width="1.80" height="1.80" fill="#a8a8a8"/>
<rect x="720.80" y="442.40" width="1.80" height="1.80" fill="#a8a8a8"/>
<rect x="732.80" y="442.40" width="1.80" height="1.80" fill="#a8a8a8"/>
<rect x="744.80" y="442.40" width="1.80" height="1.80" fill="#a8a8a8"/>
<rect x="756.80" y="442.40" width="1.80" height="1.80" fill="#a8a8a8"/>
<rect x="768.80" y="442.40" width="1.80" height="1.80" fill="#a8a8a8"/>
<rect x="780.80" y="442.40" width="1.80" height="1.80" fill="#a8a8a8"/>
<rect x="792.80" y="442.40" width="1.80" height="1.80" fill="#a8a8a8"/>
<rect x="804.80" y="442.40" width="1.80" height="1.80" fill="#a8a8a8"/>
<rect x="816.80" y="442.40" width="1.80" height="1.80" fill="#a8a8a8"/>
<rect x="828.80" y="442.40" width="1.80" height="1.80" fill="#a8a8a8"/>
<rect x="840.80" y="442.40" width="1.80" height="1.80" fill="#a8a8a8"/>
<rect x="852.80" y="442.40" width="1.80" height="1.80" fill="#a8a8a8"/>
<rect x="864.80" y="442.40" width="1.80" height="1.80" fill="#a8a8a8"/>
<rect x="876.80" y="442.40" width="1.80" height="1.80" fill="#a8a8a8"/>
<rect x="888.80" y="442.40" width="1.80" height="1.80" fill="#a8a8a8"/>
<rect x="900.80" y="442.40" width="1.80" height="1.80" fill="#a8a8a8"/>
<rect x="912.80" y="442.40" width="1.80" height="1.80" fill="#a8a8a8"/>
<rect x="924.80" y="442.40" width="1.80" height="1.80" fill="#a8a8a8"/>
<rect x="36.80" y="502.40" width="1.80" height="1.80" fill="#a8a8a8"/>
<rect x="48.80" y="502.40" width="1.80" height="1.80" fill="#a8a8a8"/>
<rect x="60.80" y="502.40" width="1.80" height="1.80" fill="#a8a8a8"/>
<rect x="72.80" y="502.40" width="1.80" height="1.80" fill="#a8a8a8"/>
<rect x="84.80" y="502.40" width="1.80" height="1.80" fill="#a8a8a8"/>
<rect x="96.80" y="502.40" width="1.80" height="1.80" fill="#a8a8a8"/>
<rect x="108.80" y="502.40" width="1.80" height="1.80" fill="#a8a8a8"/>
<rect x="120.80" y="502.40" width="1.80" height="1.80" fill="#a8a8a8"/>
<rect x="132.80" y="502.40" width="1.80" height="1.80" fill="#a8a8a8"/>
<rect x="144.80" y="502.40" width="1.80" height="1.80" fill="#a8a8a8"/>
<rect x="156.80" y="502.40" width="1.80" height="1.80" fill="#a8a8a8"/>
<rect x="168.80" y="502.40" width="1.80" height="1.80" fill="#a8a8a8"/>
<rect x="180.80" y="502.40" width="1.80" height="1.80" fill="#a8a8a8"/>
<rect x="192.80" y="502.40" width="1.80" height="1.80" fill="#a8a8a8"/>
<rect x="204.80" y="502.40" width="1.80" height="1.80" fill="#a8a8a8"/>
<rect x="216.80" y="502.40" width="1.80" height="1.80" fill="#a8a8a8"/>
<rect x="228.80" y="502.40" width="1.80" height="1.80" fill="#a8a8a8"/>
<rect x="240.80" y="502.40" width="1.80" height="1.80" fill="#a8a8a8"/>
<rect x="252.80" y="502.40" width="1.80" height="1.80" fill="#a8a8a8"/>
<rect x="264.80" y="502.40" width="1.80" height="1.80" fill="#a8a8a8"/>
<rect x="276.80" y="502.40" width="1.80" height="1.80" fill="#a8a8a8"/>
<rect x="288.80" y="502.40" width="1.80" height="1.80" fill="#a8a8a8"/>
<rect x="300.80" y="502.40" width="1.80" height="1.80" fill="#a8a8a8"/>
<rect x="312.80" y="502.40" width="1.80" height="1.80" fill="#a8a8a8"/>
<rect x="324.80" y="502.40" width="1.80" height="1.80" fill="#a8a8a8"/>
<rect x="336.80" y="502.40" width="1.80" height="1.80" fill="#a8a8a8"/>
<rect x="348.80" y="502.40" width="1.80" height="1.80" fill="#a8a8a8"/>
<rect x="360.80" y="502.40" width="1.80" height="1.80" fill="#a8a8a8"/>
<rect x="372.80" y="502.40" width="1.80" height="1.80" fill="#a8a8a8"/>
<rect x="384.80" y="502.40" width="1.80" height="1.80" fill="#a8a8a8"/>
<rect x="396.80" y="502.40" width="1.80" height="1.80" fill="#a8a8a8"/>
<rect x="408.80" y="502.40" width="1.80" height="1.80" fill="#a8a8a8"/>
<rect x="420.80" y="502.40" width="1.80" height="1.80" fill="#a8a8a8"/>
<rect x="432.80" y="502.40" width="1.80" height="1.80" fill="#a8a8a8"/>
<rect x="444.80" y="502.40" width="1.80" height="1.80" fill="#a8a8a8"/>
<rect x="456.80" y="502.40" width="1.80" height="1.80" fill="#a8a8a8"/>
<rect x="468.80" y="502.40" width="1.80" height="1.80" fill="#a8a8a8"/>
<rect x="480.80" y="502.40" width="1.80" height="1.80" fill="#a8a8a8"/>
<rect x="492.80" y="502.40" width="1.80" height="1.80" fill="#a8a8a8"/>
<rect x="504.80" y="502.40" width="1.80" height="1.80" fill="#a8a8a8"/>
<rect x="516.80" y="502.40" width="1.80" height="1.80" fill="#a8a8a8"/>
<rect x="528.80" y="502.40" width="1.80" height="1.80" fill="#a8a8a8"/>
<rect x="540.80" y="502.40" width="1.80" height="1.80" fill="#a8a8a8"/>
<rect x="552.80" y="502.40" width="1.80" height="1.80" fill="#a8a8a8"/>
<rect x="564.80" y="502.40" width="1.80" height="1.80" fill="#a8a8a8"/>
<rect x="576.80" y="502.40" width="1.80" height="1.80" fill="#a8a8a8"/>
<rect x="588.80" y="502.40" width="1.80" height="1.80" fill="#a8a8a8"/>
<rect x="600.80" y="502.40" width="1.80" height="1.80" fill="#a8a8a8"/>
<rect x="612.80" y="502.40" width="1.80" height="1.80" fill="#a8a8a8"/>
<rect x="624.80" y="502.40" width="1.80" height="1.80" fill="#a8a8a8"/>
<rect x="636.80" y="502.40" width="1.80" height="1.80" fill="#a8a8a8"/>
<rect x="648.80" y="502.40" width="1.80" height="1.80" fill="#a8a8a8"/>
<rect x="660.80" y="502.40" width="1.80" height="1.80" fill="#a8a8a8"/>
<rect x="672.80" y="502.40" width="1.80" height="1.80" fill="#a8a8a8"/>
<rect x="684.80" y="502.40" width="1.80" height="1.80" fill="#a8a8a8"/>
<rect x="696.80" y="502.40" width="1.80" height="1.80" fill="#a8a8a8"/>
<rect x="708.80" y="502.40" width="1.80" height="1.80" fill="#a8a8a8"/>
<rect x="720.80" y="502.40" width="1.80" height="1.80" fill="#a8a8a8"/>
<rect x="732.80" y="502.40" width="1.80" height="1.80" fill="#a8a8a8"/>
<rect x="744.80" y="502.40" width="1.80" height="1.80" fill="#a8a8a8"/>
<rect x="756.80" y="502.40" width="1.80" height="1.80" fill="#a8a8a8"/>
<rect x="768.80" y="502.40" width="1.80" height="1.80" fill="#a8a8a8"/>
<rect x="780.80" y="502.40" width="1.80" height="1.80" fill="#a8a8a8"/>
<rect x="792.80" y="502.40" width="1.80" height="1.80" fill="#a8a8a8"/>
<rect x="804.80" y="502.40" width="1.80" height="1.80" fill="#a8a8a8"/>
<rect x="816.80" y="502.40" width="1.80" height="1.80" fill="#a8a8a8"/>
<rect x="828.80" y="502.40" width="1.80" height="1.80" fill="#a8a8a8"/>
<rect x="840.80" y="502.40" width="1.80" height="1.80" fill="#a8a8a8"/>
<rect x="852.80" y="502.40" width="1.80" height="1.80" fill="#a8a8a8"/>
<rect x="864.80" y="502.40" width="1.80" height="1.80" fill="#a8a8a8"/>
<rect x="876.80" y="502.40" width="1.80" height="1.80" fill="#a8a8a8"/>
<rect x="888.80" y="502.40" width="1.80" height="1.80" fill="#a8a8a8"/>
<rect x="900.80" y="502.40" width="1.80" height="1.80" fill="#a8a8a8"/>
<rect x="912.80" y="502.40" width="1.80" height="1.80" fill="#a8a8a8"/>
<rect x="924.80" y="502.40" width="1.80" height="1.80" fill="#a8a8a8"/>
<rect x="36.80" y="562.40" width="1.80" height="1.80" fill="#a8a8a8"/>
<rect x="48.80" y="562.40" width="1.80" height="1.80" fill="#a8a8a8"/>
<rect x="60.80" y="562.40" width="1.80" height="1.80" fill="#a8a8a8"/>
<rect x="72.80" y="562.40" width="1.80" height="1.80" fill="#a8a8a8"/>
<rect x="84.80" y="562.40" width="1.80" height="1.80" fill="#a8a8a8"/>
<rect x="96.80" y="562.40" width="1.80" height="1.80" fill="#a8a8a8"/>
<rect x="108.80" y="562.40" width="1.80" height="1.80" fill="#a8a8a8"/>
<rect x="120.80" y="562.40" width="1.80" height="1.80" fill="#a8a8a8"/>
<rect x="132.80" y="562.40" width="1.80" height="1.80" fill="#a8a8a8"/>
<rect x="144.80" y="562.40" width="1.80" height="1.80" fill="#a8a8a8"/>
<rect x="156.80" y="562.40" width="1.80" height="1.80" fill="#a8a8a8"/>
<rect x="168.80" y="562.40" width="1.80" height="1.80" fill="#a8a8a8"/>
<rect x="180.80" y="562.40" width="1.80" height="1.80" fill="#a8a8a8"/>
<rect x="192.80" y="562.40" width="1.80" height="1.80" fill="#a8a8a8"/>
<rect x="204.80" y="562.40" width="1.80" height="1.80" fill="#a8a8a8"/>
<rect x="216.80" y="562.40" width="1.80" height="1.80" fill="#a8a8a8"/>
<rect x="228.80" y="562.40" width="1.80" height="1.80" fill="#a8a8a8"/>
<rect x="240.80" y="562.40" width="1.80" height="1.80" fill="#a8a8a8"/>
<rect x="252.80" y="562.40" width="1.80" height="1.80" fill="#a8a8a8"/>
<rect x="264.80" y="562.40" width="1.80" height="1.80" fill="#a8a8a8"/>
<rect x="276.80" y="562.40" width="1.80" height="1.80" fill="#a8a8a8"/>
<rect x="288.80" y="562.40" width="1.80" height="1.80" fill="#a8a8a8"/>
<rect x="300.80" y="562.40" width="1.80" height="1.80" fill="#a8a8a8"/>
<rect x="312.80" y="562.40" width="1.80" height="1.80" fill="#a8a8a8"/>
<rect x="324.80" y="562.40" width="1.80" height="1.80" fill="#a8a8a8"/>
<rect x="336.80" y="562.40" width="1.80" height="1.80" fill="#a8a8a8"/>
<rect x="348.80" y="562.40" width="1.80" height="1.80" fill="#a8a8a8"/>
<rect x="360.80" y="562.40" width="1.80" height="1.80" fill="#a8a8a8"/>
<rect x="372.80" y="562.40" width="1.80" height="1.80" fill="#a8a8a8"/>
<rect x="384.80" y="562.40" width="1.80" height="1.80" fill="#a8a8a8"/>
<rect x="396.80" y="562.40" width="1.80" height="1.80" fill="#a8a8a8"/>
<rect x="408.80" y="562.40" width="1.80" height="1.80" fill="#a8a8a8"/>
<rect x="420.80" y="562.40" width="1.80" height="1.80" fill="#a8a8a8"/>
<rect x="432.80" y="562.40" width="1.80" height="1.80" fill="#a8a8a8"/>
<rect x="444.80" y="562.40" width="1.80" height="1.80" fill="#a8a8a8"/>
<rect x="456.80" y="562.40" width="1.80" height="1.80" fill="#a8a8a8"/>
<rect x="468.80" y="562.40" width="1.80" height="1.80" fill="#a8a8a8"/>
<rect x="480.80" y="562.40" width="1.80" height="1.80" fill="#a8a8a8"/>
<rect x="492.80" y="562.40" width="1.80" height="1.80" fill="#a8a8a8"/>
<rect x="504.80" y="562.40" width="1.80" height="1.80" fill="#a8a8a8"/>
<rect x="516.80" y="562.40" width="1.80" height="1.80" fill="#a8a8a8"/>
<rect x="528.80" y="562.40" width="1.80" height="1.80" fill="#a8a8a8"/>
<rect x="540.80" y="562.40" width="1.80" height="1.80" fill="#a8a8a8"/>
<rect x="552.80" y="562.40" width="1.80" height="1.80" fill="#a8a8a8"/>
<rect x="564.80" y="562.40" width="1.80" height="1.80" fill="#a8a8a8"/>
<rect x="576.80" y="562.40" width="1.80" height="1.80" fill="#a8a8a8"/>
<rect x="588.80" y="562.40" width="1.80" height="1.80" fill="#a8a8a8"/>
<rect x="600.80" y="562.40" width="1.80" height="1.80" fill="#a8a8a8"/>
<rect x="612.80" y="562.40" width="1.80" height="1.80" fill="#a8a8a8"/>
<rect x="624.80" y="562.40" width="1.80" height="1.80" fill="#a8a8a8"/>
<rect x="636.80" y="562.40" width="1.80" height="1.80" fill="#a8a8a8"/>
<rect x="648.80" y="562.40" width="1.80" height="1.80" fill="#a8a8a8"/>
<rect x="660.80" y="562.40" width="1.80" height="1.80" fill="#a8a8a8"/>
<rect x="672.80" y="562.40" width="1.80" height="1.80" fill="#a8a8a8"/>
<rect x="684.80" y="562.40" width="1.80" height="1.80" fill="#a8a8a8"/>
<rect x="696.80" y="562.40" width="1.80" height="1.80" fill="#a8a8a8"/>
<rect x="708.80" y="562.40" width="1.80" height="1.80" fill="#a8a8a8"/>
<rect x="720.80" y="562.40" width="1.80" height="1.80" fill="#a8a8a8"/>
<rect x="732.80" y="562.40" width="1.80" height="1.80" fill="#a8a8a8"/>
<rect x="744.80" y="562.40" width="1.80" height="1.80" fill="#a8a8a8"/>
<rect x="756.80" y="562.40" width="1.80" height="1.80" fill="#a8a8a8"/>
<rect x="768.80" y="562.40" width="1.80" height="1.80" fill="#a8a8a8"/>
<rect x="780.80" y="562.40" width="1.80" height="1.80" fill="#a8a8a8"/>
<rect x="792.80" y="562.40" width="1.80" height="1.80" fill="#a8a8a8"/>
<rect x="804.80" y="562.40" width="1.80" height="1.80" fill="#a8a8a8"/>
<rect x="816.80" y="562.40" width="1.80" height="1.80" fill="#a8a8a8"/>
<rect x="828.80" y="562.40" width="1.80" height="1.80" fill="#a8a8a8"/>
<rect x="840.80" y="562.40" width="1.80" height="1.80" fill="#a8a8a8"/>
<rect x="852.80" y="562.40" width="1.80" height="1.80" fill="#a8a8a8"/>
<rect x="864.80" y="562.40" width="1.80" height="1.80" fill="#a8a8a8"/>
<rect x="876.80" y="562.40" width="1.80" height="1.80" fill="#a8a8a8"/>
<rect x="888.80" y="562.40" width="1.80" height="1.80" fill="#a8a8a8"/>
<rect x="900.80" y="562.40" width="1.80" height="1.80" fill="#a8a8a8"/>
<rect x="912.80" y="562.40" width="1.80" height="1.80" fill="#a8a8a8"/>
<rect x="924.80" y="562.40" width="1.80" height="1.80" fill="#a8a8a8"/>
<rect x="479.50" y="34.50" width="4.40" height="1.60" fill="#dcdcdc"/>
<rect x="479.50" y="46.50" width="4.40" height="1.60" fill="#dcdcdc"/>
<rect x="479.50" y="58.50" width="4.40" height="1.60" fill="#dcdcdc"/>
<rect x="479.50" y="70.50" width="4.40" height="1.60" fill="#dcdcdc"/>
<rect x="479.50" y="82.50" width="4.40" height="1.60" fill="#dcdcdc"/>
<rect x="479.50" y="94.50" width="4.40" height="1.60" fill="#dcdcdc"/>
<rect x="479.50" y="106.50" width="4.40" height="1.60" fill="#dcdcdc"/>
<rect x="479.50" y="118.50" width="4.40" height="1.60" fill="#dcdcdc"/>
<rect x="479.50" y="130.50" width="4.40" height="1.60" fill="#dcdcdc"/>
<rect x="479.50" y="142.50" width="4.40" height="1.60" fill="#dcdcdc"/>
<rect x="479.50" y="154.50" width="4.40" height="1.60" fill="#dcdcdc"/>
<rect x="479.50" y="166.50" width="4.40" height="1.60" fill="#dcdcdc"/>
<rect x="479.50" y="178.50" width="4.40" height="1.60" fill="#dcdcdc"/>
<rect x="479.50" y="190.50" width="4.40" height="1.60" fill="#dcdcdc"/>
<rect x="479.50" y="202.50" width="4.40" height="1.60" fill="#dcdcdc"/>
<rect x="479.50" y="214.50" width="4.40" height="1.60" fill="#dcdcdc"/>
<rect x="479.50" y="226.50" width="4.40" height="1.60" fill="#dcdcdc"/>
<rect x="479.50" y="238.50" width="4.40" height="1.60" fill="#dcdcdc"/>
<rect x="479.50" y="250.50" width="4.40" height="1.60" fill="#dcdcdc"/>
<rect x="479.50" y="262.50" width="4.40" height="1.60" fill="#dcdcdc"/>
<rect x="479.50" y="274.50" width="4.40" height="1.60" fill="#dcdcdc"/>
<rect x="479.50" y="286.50" width="4.40" height="1.60" fill="#dcdcdc"/>
<rect x="479.50" y="298.50" width="4.40" height="1.60" fill="#dcdcdc"/>
<rect x="479.50" y="310.50" width="4.40" height="1.60" fill="#dcdcdc"/>
<rect x="479.50" y="322.50" width="4.40" height="1.60" fill="#dcdcdc"/>
<rect x="479.50" y="334.50" width="4.40" height="1.60" fill="#dcdcdc"/>
<rect x="479.50" y="346.50" width="4.40" height="1.60" fill="#dcdcdc"/>
<rect x="479.50" y="358.50" width="4.40" height="1.60" fill="#dcdcdc"/>
<rect x="479.50" y="370.50" width="4.40" height="1.60" fill="#dcdcdc"/>
<rect x="479.50" y="382.50" width="4.40" height="1.60" fill="#dcdcdc"/>
<rect x="479.50" y="394.50" width="4.40" height="1.60" fill="#dcdcdc"/>
<rect x="479.50" y="406.50" width="4.40" height="1.60" fill="#dcdcdc"/>
<rect x="479.50" y="418.50" width="4.40" height="1.60" fill="#dcdcdc"/>
<rect x="479.50" y="430.50" width="4.40" height="1.60" fill="#dcdcdc"/>
<rect x="479.50" y="442.50" width="4.40" height="1.60" fill="#dcdcdc"/>
<rect x="479.50" y="454.50" width="4.40" height="1.60" fill="#dcdcdc"/>
<rect x="479.50" y="466.50" width="4.40" height="1.60" fill="#dcdcdc"/>
<rect x="479.50" y="478.50" width="4.40" height="1.60" fill="#dcdcdc"/>
<rect x="479.50" y="490.50" width="4.40" height="1.60" fill="#dcdcdc"/>
<rect x="479.50" y="502.50" width="4.40" height="1.60" fill="#dcdcdc"/>
<rect x="479.50" y="514.50" width="4.40" height="1.60" fill="#dcdcdc"/>
<rect x="479.50" y="526.50" width="4.40" height="1.60" fill="#dcdcdc"/>
<rect x="479.50" y="538.50" width="4.40" height="1.60" fill="#dcdcdc"/>
<rect x="479.50" y="550.50" width="4.40" height="1.60" fill="#dcdcdc"/>
<rect x="479.50" y="562.50" width="4.40" height="1.60" fill="#dcdcdc"/>
<rect x="479.50" y="574.50" width="4.40" height="1.60" fill="#dcdcdc"/>
<rect x="479.50" y="586.50" width="4.40" height="1.60" fill="#dcdcdc"/>
<rect x="479.50" y="598.50" width="4.40" height="1.60" fill="#dcdcdc"/>
<rect x="479.50" y="610.50" width="4.40" height="1.60" fill="#dcdcdc"/>
<rect x="36.90" y="321.10" width="1.60" height="4.40" fill="#dcdcdc"/>
<rect x="48.90" y="321.10" width="1.60" height="4.40" fill="#dcdcdc"/>
<rect x="60.90" y="321.10" width="1.60" height="4.40" fill="#dcdcdc"/>
<rect x="72.90" y="321.10" width="1.60" height="4.40" fill="#dcdcdc"/>
<rect x="84.90" y="321.10" width="1.60" height="4.40" fill="#dcdcdc"/>
<rect x="96.90" y="321.10" width="1.60" height="4.40" fill="#dcdcdc"/>
<rect x="108.90" y="321.10" width="1.60" height="4.40" fill="#dcdcdc"/>
<rect x="120.90" y="321.10" width="1.60" height="4.40" fill="#dcdcdc"/>
<rect x="132.90" y="321.10" width="1.60" height="4.40" fill="#dcdcdc"/>
<rect x="144.90" y="321.10" width="1.60" height="4.40" fill="#dcdcdc"/>
<rect x="156.90" y="321.10" width="1.60" height="4.40" fill="#dcdcdc"/>
<rect x="168.90" y="321.10" width="1.60" height="4.40" fill="#dcdcdc"/>
<rect x="180.90" y="321.10" width="1.60" height="4.40" fill="#dcdcdc"/>
<rect x="192.90" y="321.10" width="1.60" height="4.40" fill="#dcdcdc"/>
<rect x="204.90" y="321.10" width="1.60" height="4.40" fill="#dcdcdc"/>
<rect x="216.90" y="321.10" width="1.60" height="4.40" fill="#dcdcdc"/>
<rect x="228.90" y="321.10" width="1.60" height="4.40" fill="#dcdcdc"/>
<rect x="240.90" y="321.10" width="1.60" height="4.40" fill="#dcdcdc"/>
<rect x="252.90" y="321.10" width="1.60" height="4.40" fill="#dcdcdc"/>
<rect x="264.90" y="321.10" width="1.60" height="4.40" fill="#dcdcdc"/>
<rect x="276.90" y="321.10" width="1.60" height="4.40" fill="#dcdcdc"/>
<rect x="288.90" y="321.10" width="1.60" height="4.40" fill="#dcdcdc"/>
<rect x="300.90" y="321.10" width="1.60" height="4.40" fill="#dcdcdc"/>
<rect x="312.90" y="321.10" width="1.60" height="4.40" fill="#dcdcdc"/>
<rect x="324.90" y="321.10" width="1.60" height="4.40" fill="#dcdcdc"/>
<rect x="336.90" y="321.10" width="1.60" height="4.40" fill="#dcdcdc"/>
<rect x="348.90" y="321.10" width="1.60" height="4.40" fill="#dcdcdc"/>
<rect x="360.90" y="321.10" width="1.60" height="4.40" fill="#dcdcdc"/>
<rect x="372.90" y="321.10" width="1.60" height="4.40" fill="#dcdcdc"/>
<rect x="384.90" y="321.10" width="1.60" height="4.40" fill="#dcdcdc"/>
<rect x="396.90" y="321.10" width="1.60" height="4.40" fill="#dcdcdc"/>
<rect x="408.90" y="321.10" width="1.60" height="4.40" fill="#dcdcdc"/>
<rect x="420.90" y="321.10" width="1.60" height="4.40" fill="#dcdcdc"/>
<rect x="432.90" y="321.10" width="1.60" height="4.40" fill="#dcdcdc"/>
<rect x="444.90" y="321.10" width="1.60" height="4.40" fill="#dcdcdc"/>
<rect x="456.90" y="321.10" width="1.60" height="4.40" fill="#dcdcdc"/>
<rect x="468.90" y="321.10" width="1.60" height="4.40" fill="#dcdcdc"/>
<rect x="480.90" y="321.10" width="1.60" height="4.40" fill="#dcdcdc"/>
<rect x="492.90" y="321.10" width="1.60" height="4.40" fill="#dcdcdc"/>
<rect x="504.90" y="321.10" width="1.60" height="4.40" fill="#dcdcdc"/>
<rect x="516.90" y="321.10" width="1.60" height="4.40" fill="#dcdcdc"/>
<rect x="528.90" y="321.10" width="1.60" height="4.40" fill="#dcdcdc"/>
<rect x="540.90" y="321.10" width="1.60" height="4.40" fill="#dcdcdc"/>
<rect x="552.90" y="321.10" width="1.60" height="4.40" fill="#dcdcdc"/>
<rect x="564.90" y="321.10" width="1.60" height="4.40" fill="#dcdcdc"/>
<rect x="576.90" y="321.10" width="1.60" height="4.40" fill="#dcdcdc"/>
<rect x="588.90" y="321.10" width="1.60" height="4.40" fill="#dcdcdc"/>
<rect x="600.90" y="321.10" width="1.60" height="4.40" fill="#dcdcdc"/>
<rect x="612.90" y="321.10" width="1.60" height="4.40" fill="#dcdcdc"/>
<rect x="624.90" y="321.10" width="1.60" height="4.40" fill="#dcdcdc"/>
<rect x="636.90" y="321.10" width="1.60" height="4.40" fill="#dcdcdc"/>
<rect x="648.90" y="321.10" width="1.60" height="4.40" fill="#dcdcdc"/>
<rect x="660.90" y="321.10" width="1.60" height="4.40" fill="#dcdcdc"/>
<rect x="672.90" y="321.10" width="1.60" height="4.40" fill="#dcdcdc"/>
<rect x="684.90" y="321.10" width="1.60" height="4.40" fill="#dcdcdc"/>
<rect x="696.90" y="321.10" width="1.60" height="4.40" fill="#dcdcdc"/>
<rect x="708.90" y="321.10" width="1.60" height="4.40" fill="#dcdcdc"/>
<rect x="720.90" y="321.10" width="1.60" height="4.40" fill="#dcdcdc"/>
<rect x="732.90" y="321.10" width="1.60" height="4.40" fill="#dcdcdc"/>
<rect x="744.90" y="321.10" width="1.60" height="4.40" fill="#dcdcdc"/>
<rect x="756.90" y="321.10" width="1.60" height="4.40" fill="#dcdcdc"/>
<rect x="768.90" y="321.10" width="1.60" height="4.40" fill="#dcdcdc"/>
<rect x="780.90" y="321.10" width="1.60" height="4.40" fill="#dcdcdc"/>
<rect x="792.90" y="321.10" width="1.60" height="4.40" fill="#dcdcdc"/>
<rect x="804.90" y="321.10" width="1.60" height="4.40" fill="#dcdcdc"/>
<rect x="816.90" y="321.10" width="1.60" height="4.40" fill="#dcdcdc"/>
<rect x="828.90" y="321.10" width="1.60" height="4.40" fill="#dcdcdc"/>
<rect x="840.90" y="321.10" width="1.60" height="4.40" fill="#dcdcdc"/>
<rect x="852.90" y="321.10" width="1.60" height="4.40" fill="#dcdcdc"/>
<rect x="864.90" y="321.10" width="1.60" height="4.40" fill="#dcdcdc"/>
<rect x="876.90" y="321.10" width="1.60" height="4.40" fill="#dcdcdc"/>
<rect x="888.90" y="321.10" width="1.60" height="4.40" fill="#dcdcdc"/>
<rect x="900.90" y="321.10" width="1.60" height="4.40" fill="#dcdcdc"/>
<rect x="912.90" y="321.10" width="1.60" height="4.40" fill="#dcdcdc"/>
<rect x="924.90" y="321.10" width="1.60" height="4.40" fill="#dcdcdc"/>
<rect x="174.70" y="322.60" width="14.00" height="1.40" fill="#ececec"/>
<rect x="181.00" y="316.30" width="1.40" height="14.00" fill="#ececec"/>
<rect x="774.70" y="322.60" width="14.00" height="1.40" fill="#ececec"/>
<rect x="781.00" y="316.30" width="1.40" height="14.00" fill="#ececec"/>
<rect x="37.00" y="25.00" width="1.40" height="3.00" fill="#e0e0e0"/>
<rect x="37.00" y="618.00" width="1.40" height="3.00" fill="#e0e0e0"/>
<rect x="49.00" y="25.00" width="1.40" height="3.00" fill="#e0e0e0"/>
<rect x="49.00" y="618.00" width="1.40" height="3.00" fill="#e0e0e0"/>
<rect x="61.00" y="25.00" width="1.40" height="6.00" fill="#e0e0e0"/>
<rect x="61.00" y="615.00" width="1.40" height="6.00" fill="#e0e0e0"/>
<rect x="73.00" y="25.00" width="1.40" height="3.00" fill="#e0e0e0"/>
<rect x="73.00" y="618.00" width="1.40" height="3.00" fill="#e0e0e0"/>
<rect x="85.00" y="25.00" width="1.40" height="3.00" fill="#e0e0e0"/>
<rect x="85.00" y="618.00" width="1.40" height="3.00" fill="#e0e0e0"/>
<rect x="97.00" y="25.00" width="1.40" height="3.00" fill="#e0e0e0"/>
<rect x="97.00" y="618.00" width="1.40" height="3.00" fill="#e0e0e0"/>
<rect x="109.00" y="25.00" width="1.40" height="3.00" fill="#e0e0e0"/>
<rect x="109.00" y="618.00" width="1.40" height="3.00" fill="#e0e0e0"/>
<rect x="121.00" y="25.00" width="1.40" height="6.00" fill="#e0e0e0"/>
<rect x="121.00" y="615.00" width="1.40" height="6.00" fill="#e0e0e0"/>
<rect x="133.00" y="25.00" width="1.40" height="3.00" fill="#e0e0e0"/>
<rect x="133.00" y="618.00" width="1.40" height="3.00" fill="#e0e0e0"/>
<rect x="145.00" y="25.00" width="1.40" height="3.00" fill="#e0e0e0"/>
<rect x="145.00" y="618.00" width="1.40" height="3.00" fill="#e0e0e0"/>
<rect x="157.00" y="25.00" width="1.40" height="3.00" fill="#e0e0e0"/>
<rect x="157.00" y="618.00" width="1.40" height="3.00" fill="#e0e0e0"/>
<rect x="169.00" y="25.00" width="1.40" height="3.00" fill="#e0e0e0"/>
<rect x="169.00" y="618.00" width="1.40" height="3.00" fill="#e0e0e0"/>
<rect x="181.00" y="25.00" width="1.40" height="6.00" fill="#e0e0e0"/>
<rect x="181.00" y="615.00" width="1.40" height="6.00" fill="#e0e0e0"/>
<rect x="193.00" y="25.00" width="1.40" height="3.00" fill="#e0e0e0"/>
<rect x="193.00" y="618.00" width="1.40" height="3.00" fill="#e0e0e0"/>
<rect x="205.00" y="25.00" width="1.40" height="3.00" fill="#e0e0e0"/>
<rect x="205.00" y="618.00" width="1.40" height="3.00" fill="#e0e0e0"/>
<rect x="217.00" y="25.00" width="1.40" height="3.00" fill="#e0e0e0"/>
<rect x="217.00" y="618.00" width="1.40" height="3.00" fill="#e0e0e0"/>
<rect x="229.00" y="25.00" width="1.40" height="3.00" fill="#e0e0e0"/>
<rect x="229.00" y="618.00" width="1.40" height="3.00" fill="#e0e0e0"/>
<rect x="241.00" y="25.00" width="1.40" height="6.00" fill="#e0e0e0"/>
<rect x="241.00" y="615.00" width="1.40" height="6.00" fill="#e0e0e0"/>
<rect x="253.00" y="25.00" width="1.40" height="3.00" fill="#e0e0e0"/>
<rect x="253.00" y="618.00" width="1.40" height="3.00" fill="#e0e0e0"/>
<rect x="265.00" y="25.00" width="1.40" height="3.00" fill="#e0e0e0"/>
<rect x="265.00" y="618.00" width="1.40" height="3.00" fill="#e0e0e0"/>
<rect x="277.00" y="25.00" width="1.40" height="3.00" fill="#e0e0e0"/>
<rect x="277.00" y="618.00" width="1.40" height="3.00" fill="#e0e0e0"/>
<rect x="289.00" y="25.00" width="1.40" height="3.00" fill="#e0e0e0"/>
<rect x="289.00" y="618.00" width="1.40" height="3.00" fill="#e0e0e0"/>
<rect x="301.00" y="25.00" width="1.40" height="6.00" fill="#e0e0e0"/>
<rect x="301.00" y="615.00" width="1.40" height="6.00" fill="#e0e0e0"/>
<rect x="313.00" y="25.00" width="1.40" height="3.00" fill="#e0e0e0"/>
<rect x="313.00" y="618.00" width="1.40" height="3.00" fill="#e0e0e0"/>
<rect x="325.00" y="25.00" width="1.40" height="3.00" fill="#e0e0e0"/>
<rect x="325.00" y="618.00" width="1.40" height="3.00" fill="#e0e0e0"/>
<rect x="337.00" y="25.00" width="1.40" height="3.00" fill="#e0e0e0"/>
<rect x="337.00" y="618.00" width="1.40" height="3.00" fill="#e0e0e0"/>
<rect x="349.00" y="25.00" width="1.40" height="3.00" fill="#e0e0e0"/>
<rect x="349.00" y="618.00" width="1.40" height="3.00" fill="#e0e0e0"/>
<rect x="361.00" y="25.00" width="1.40" height="6.00" fill="#e0e0e0"/>
<rect x="361.00" y="615.00" width="1.40" height="6.00" fill="#e0e0e0"/>
<rect x="373.00" y="25.00" width="1.40" height="3.00" fill="#e0e0e0"/>
<rect x="373.00" y="618.00" width="1.40" height="3.00" fill="#e0e0e0"/>
<rect x="385.00" y="25.00" width="1.40" height="3.00" fill="#e0e0e0"/>
<rect x="385.00" y="618.00" width="1.40" height="3.00" fill="#e0e0e0"/>
<rect x="397.00" y="25.00" width="1.40" height="3.00" fill="#e0e0e0"/>
<rect x="397.00" y="618.00" width="1.40" height="3.00" fill="#e0e0e0"/>
<rect x="409.00" y="25.00" width="1.40" height="3.00" fill="#e0e0e0"/>
<rect x="409.00" y="618.00" width="1.40" height="3.00" fill="#e0e0e0"/>
<rect x="421.00" y="25.00" width="1.40" height="6.00" fill="#e0e0e0"/>
<rect x="421.00" y="615.00" width="1.40" height="6.00" fill="#e0e0e0"/>
<rect x="433.00" y="25.00" width="1.40" height="3.00" fill="#e0e0e0"/>
<rect x="433.00" y="618.00" width="1.40" height="3.00" fill="#e0e0e0"/>
<rect x="445.00" y="25.00" width="1.40" height="3.00" fill="#e0e0e0"/>
<rect x="445.00" y="618.00" width="1.40" height="3.00" fill="#e0e0e0"/>
<rect x="457.00" y="25.00" width="1.40" height="3.00" fill="#e0e0e0"/>
<rect x="457.00" y="618.00" width="1.40" height="3.00" fill="#e0e0e0"/>
<rect x="469.00" y="25.00" width="1.40" height="3.00" fill="#e0e0e0"/>
<rect x="469.00" y="618.00" width="1.40" height="3.00" fill="#e0e0e0"/>
<rect x="481.00" y="25.00" width="1.40" height="6.00" fill="#e0e0e0"/>
<rect x="481.00" y="615.00" width="1.40" height="6.00" fill="#e0e0e0"/>
<rect x="493.00" y="25.00" width="1.40" height="3.00" fill="#e0e0e0"/>
<rect x="493.00" y="618.00" width="1.40" height="3.00" fill="#e0e0e0"/>
<rect x="505.00" y="25.00" width="1.40" height="3.00" fill="#e0e0e0"/>
<rect x="505.00" y="618.00" width="1.40" height="3.00" fill="#e0e0e0"/>
<rect x="517.00" y="25.00" width="1.40" height="3.00" fill="#e0e0e0"/>
<rect x="517.00" y="618.00" width="1.40" height="3.00" fill="#e0e0e0"/>
<rect x="529.00" y="25.00" width="1.40" height="3.00" fill="#e0e0e0"/>
<rect x="529.00" y="618.00" width="1.40" height="3.00" fill="#e0e0e0"/>
<rect x="541.00" y="25.00" width="1.40" height="6.00" fill="#e0e0e0"/>
<rect x="541.00" y="615.00" width="1.40" height="6.00" fill="#e0e0e0"/>
<rect x="553.00" y="25.00" width="1.40" height="3.00" fill="#e0e0e0"/>
<rect x="553.00" y="618.00" width="1.40" height="3.00" fill="#e0e0e0"/>
<rect x="565.00" y="25.00" width="1.40" height="3.00" fill="#e0e0e0"/>
<rect x="565.00" y="618.00" width="1.40" height="3.00" fill="#e0e0e0"/>
<rect x="577.00" y="25.00" width="1.40" height="3.00" fill="#e0e0e0"/>
<rect x="577.00" y="618.00" width="1.40" height="3.00" fill="#e0e0e0"/>
<rect x="589.00" y="25.00" width="1.40" height="3.00" fill="#e0e0e0"/>
<rect x="589.00" y="618.00" width="1.40" height="3.00" fill="#e0e0e0"/>
<rect x="601.00" y="25.00" width="1.40" height="6.00" fill="#e0e0e0"/>
<rect x="601.00" y="615.00" width="1.40" height="6.00" fill="#e0e0e0"/>
<rect x="613.00" y="25.00" width="1.40" height="3.00" fill="#e0e0e0"/>
<rect x="613.00" y="618.00" width="1.40" height="3.00" fill="#e0e0e0"/>
<rect x="625.00" y="25.00" width="1.40" height="3.00" fill="#e0e0e0"/>
<rect x="625.00" y="618.00" width="1.40" height="3.00" fill="#e0e0e0"/>
<rect x="637.00" y="25.00" width="1.40" height="3.00" fill="#e0e0e0"/>
<rect x="637.00" y="618.00" width="1.40" height="3.00" fill="#e0e0e0"/>
<rect x="649.00" y="25.00" width="1.40" height="3.00" fill="#e0e0e0"/>
<rect x="649.00" y="618.00" width="1.40" height="3.00" fill="#e0e0e0"/>
<rect x="661.00" y="25.00" width="1.40" height="6.00" fill="#e0e0e0"/>
<rect x="661.00" y="615.00" width="1.40" height="6.00" fill="#e0e0e0"/>
<rect x="673.00" y="25.00" width="1.40" height="3.00" fill="#e0e0e0"/>
<rect x="673.00" y="618.00" width="1.40" height="3.00" fill="#e0e0e0"/>
<rect x="685.00" y="25.00" width="1.40" height="3.00" fill="#e0e0e0"/>
<rect x="685.00" y="618.00" width="1.40" height="3.00" fill="#e0e0e0"/>
<rect x="697.00" y="25.00" width="1.40" height="3.00" fill="#e0e0e0"/>
<rect x="697.00" y="618.00" width="1.40" height="3.00" fill="#e0e0e0"/>
<rect x="709.00" y="25.00" width="1.40" height="3.00" fill="#e0e0e0"/>
<rect x="709.00" y="618.00" width="1.40" height="3.00" fill="#e0e0e0"/>
<rect x="721.00" y="25.00" width="1.40" height="6.00" fill="#e0e0e0"/>
<rect x="721.00" y="615.00" width="1.40" height="6.00" fill="#e0e0e0"/>
<rect x="733.00" y="25.00" width="1.40" height="3.00" fill="#e0e0e0"/>
<rect x="733.00" y="618.00" width="1.40" height="3.00" fill="#e0e0e0"/>
<rect x="745.00" y="25.00" width="1.40" height="3.00" fill="#e0e0e0"/>
<rect x="745.00" y="618.00" width="1.40" height="3.00" fill="#e0e0e0"/>
<rect x="757.00" y="25.00" width="1.40" height="3.00" fill="#e0e0e0"/>
<rect x="757.00" y="618.00" width="1.40" height="3.00" fill="#e0e0e0"/>
<rect x="769.00" y="25.00" width="1.40" height="3.00" fill="#e0e0e0"/>
<rect x="769.00" y="618.00" width="1.40" height="3.00" fill="#e0e0e0"/>
<rect x="781.00" y="25.00" width="1.40" height="6.00" fill="#e0e0e0"/>
<rect x="781.00" y="615.00" width="1.40" height="6.00" fill="#e0e0e0"/>
<rect x="793.00" y="25.00" width="1.40" height="3.00" fill="#e0e0e0"/>
<rect x="793.00" y="618.00" width="1.40" height="3.00" fill="#e0e0e0"/>
<rect x="805.00" y="25.00" width="1.40" height="3.00" fill="#e0e0e0"/>
<rect x="805.00" y="618.00" width="1.40" height="3.00" fill="#e0e0e0"/>
<rect x="817.00" y="25.00" width="1.40" height="3.00" fill="#e0e0e0"/>
<rect x="817.00" y="618.00" width="1.40" height="3.00" fill="#e0e0e0"/>
<rect x="829.00" y="25.00" width="1.40" height="3.00" fill="#e0e0e0"/>
<rect x="829.00" y="618.00" width="1.40" height="3.00" fill="#e0e0e0"/>
<rect x="841.00" y="25.00" width="1.40" height="6.00" fill="#e0e0e0"/>
<rect x="841.00" y="615.00" width="1.40" height="6.00" fill="#e0e0e0"/>
<rect x="853.00" y="25.00" width="1.40" height="3.00" fill="#e0e0e0"/>
<rect x="853.00" y="618.00" width="1.40" height="3.00" fill="#e0e0e0"/>
<rect x="865.00" y="25.00" width="1.40" height="3.00" fill="#e0e0e0"/>
<rect x="865.00" y="618.00" width="1.40" height="3.00" fill="#e0e0e0"/>
<rect x="877.00" y="25.00" width="1.40" height="3.00" fill="#e0e0e0"/>
<rect x="877.00" y="618.00" width="1.40" height="3.00" fill="#e0e0e0"/>
<rect x="889.00" y="25.00" width="1.40" height="3.00" fill="#e0e0e0"/>
<rect x="889.00" y="618.00" width="1.40" height="3.00" fill="#e0e0e0"/>
<rect x="901.00" y="25.00" width="1.40" height="6.00" fill="#e0e0e0"/>
<rect x="901.00" y="615.00" width="1.40" height="6.00" fill="#e0e0e0"/>
<rect x="913.00" y="25.00" width="1.40" height="3.00" fill="#e0e0e0"/>
<rect x="913.00" y="618.00" width="1.40" height="3.00" fill="#e0e0e0"/>
<rect x="925.00" y="25.00" width="1.40" height="3.00" fill="#e0e0e0"/>
<rect x="925.00" y="618.00" width="1.40" height="3.00" fill="#e0e0e0"/>
<rect x="26.00" y="34.60" width="4.00" height="1.40" fill="#e0e0e0"/>
<rect x="930.00" y="34.60" width="4.00" height="1.40" fill="#e0e0e0"/>
<rect x="26.00" y="46.60" width="4.00" height="1.40" fill="#e0e0e0"/>
<rect x="930.00" y="46.60" width="4.00" height="1.40" fill="#e0e0e0"/>
<rect x="26.00" y="58.60" width="4.00" height="1.40" fill="#e0e0e0"/>
<rect x="930.00" y="58.60" width="4.00" height="1.40" fill="#e0e0e0"/>
<rect x="26.00" y="70.60" width="4.00" height="1.40" fill="#e0e0e0"/>
<rect x="930.00" y="70.60" width="4.00" height="1.40" fill="#e0e0e0"/>
<rect x="26.00" y="82.60" width="7.00" height="1.40" fill="#e0e0e0"/>
<rect x="927.00" y="82.60" width="7.00" height="1.40" fill="#e0e0e0"/>
<rect x="26.00" y="94.60" width="4.00" height="1.40" fill="#e0e0e0"/>
<rect x="930.00" y="94.60" width="4.00" height="1.40" fill="#e0e0e0"/>
<rect x="26.00" y="106.60" width="4.00" height="1.40" fill="#e0e0e0"/>
<rect x="930.00" y="106.60" width="4.00" height="1.40" fill="#e0e0e0"/>
<rect x="26.00" y="118.60" width="4.00" height="1.40" fill="#e0e0e0"/>
<rect x="930.00" y="118.60" width="4.00" height="1.40" fill="#e0e0e0"/>
<rect x="26.00" y="130.60" width="4.00" height="1.40" fill="#e0e0e0"/>
<rect x="930.00" y="130.60" width="4.00" height="1.40" fill="#e0e0e0"/>
<rect x="26.00" y="142.60" width="7.00" height="1.40" fill="#e0e0e0"/>
<rect x="927.00" y="142.60" width="7.00" height="1.40" fill="#e0e0e0"/>
<rect x="26.00" y="154.60" width="4.00" height="1.40" fill="#e0e0e0"/>
<rect x="930.00" y="154.60" width="4.00" height="1.40" fill="#e0e0e0"/>
<rect x="26.00" y="166.60" width="4.00" height="1.40" fill="#e0e0e0"/>
<rect x="930.00" y="166.60" width="4.00" height="1.40" fill="#e0e0e0"/>
<rect x="26.00" y="178.60" width="4.00" height="1.40" fill="#e0e0e0"/>
<rect x="930.00" y="178.60" width="4.00" height="1.40" fill="#e0e0e0"/>
<rect x="26.00" y="190.60" width="4.00" height="1.40" fill="#e0e0e0"/>
<rect x="930.00" y="190.60" width="4.00" height="1.40" fill="#e0e0e0"/>
<rect x="26.00" y="202.60" width="7.00" height="1.40" fill="#e0e0e0"/>
<rect x="927.00" y="202.60" width="7.00" height="1.40" fill="#e0e0e0"/>
<rect x="26.00" y="214.60" width="4.00" height="1.40" fill="#e0e0e0"/>
<rect x="930.00" y="214.60" width="4.00" height="1.40" fill="#e0e0e0"/>
<rect x="26.00" y="226.60" width="4.00" height="1.40" fill="#e0e0e0"/>
<rect x="930.00" y="226.60" width="4.00" height="1.40" fill="#e0e0e0"/>
<rect x="26.00" y="238.60" width="4.00" height="1.40" fill="#e0e0e0"/>
<rect x="930.00" y="238.60" width="4.00" height="1.40" fill="#e0e0e0"/>
<rect x="26.00" y="250.60" width="4.00" height="1.40" fill="#e0e0e0"/>
<rect x="930.00" y="250.60" width="4.00" height="1.40" fill="#e0e0e0"/>
<rect x="26.00" y="262.60" width="7.00" height="1.40" fill="#e0e0e0"/>
<rect x="927.00" y="262.60" width="7.00" height="1.40" fill="#e0e0e0"/>
<rect x="26.00" y="274.60" width="4.00" height="1.40" fill="#e0e0e0"/>
<rect x="930.00" y="274.60" width="4.00" height="1.40" fill="#e0e0e0"/>
<rect x="26.00" y="286.60" width="4.00" height="1.40" fill="#e0e0e0"/>
<rect x="930.00" y="286.60" width="4.00" height="1.40" fill="#e0e0e0"/>
<rect x="26.00" y="298.60" width="4.00" height="1.40" fill="#e0e0e0"/>
<rect x="930.00" y="298.60" width="4.00" height="1.40" fill="#e0e0e0"/>
<rect x="26.00" y="310.60" width="4.00" height="1.40" fill="#e0e0e0"/>
<rect x="930.00" y="310.60" width="4.00" height="1.40" fill="#e0e0e0"/>
<rect x="26.00" y="322.60" width="7.00" height="1.40" fill="#e0e0e0"/>
<rect x="927.00" y="322.60" width="7.00" height="1.40" fill="#e0e0e0"/>
<rect x="26.00" y="334.60" width="4.00" height="1.40" fill="#e0e0e0"/>
<rect x="930.00" y="334.60" width="4.00" height="1.40" fill="#e0e0e0"/>
<rect x="26.00" y="346.60" width="4.00" height="1.40" fill="#e0e0e0"/>
<rect x="930.00" y="346.60" width="4.00" height="1.40" fill="#e0e0e0"/>
<rect x="26.00" y="358.60" width="4.00" height="1.40" fill="#e0e0e0"/>
<rect x="930.00" y="358.60" width="4.00" height="1.40" fill="#e0e0e0"/>
<rect x="26.00" y="370.60" width="4.00" height="1.40" fill="#e0e0e0"/>
<rect x="930.00" y="370.60" width="4.00" height="1.40" fill="#e0e0e0"/>
<rect x="26.00" y="382.60" width="7.00" height="1.40" fill="#e0e0e0"/>
<rect x="927.00" y="382.60" width="7.00" height="1.40" fill="#e0e0e0"/>
<rect x="26.00" y="394.60" width="4.00" height="1.40" fill="#e0e0e0"/>
<rect x="930.00" y="394.60" width="4.00" height="1.40" fill="#e0e0e0"/>
<rect x="26.00" y="406.60" width="4.00" height="1.40" fill="#e0e0e0"/>
<rect x="930.00" y="406.60" width="4.00" height="1.40" fill="#e0e0e0"/>
<rect x="26.00" y="418.60" width="4.00" height="1.40" fill="#e0e0e0"/>
<rect x="930.00" y="418.60" width="4.00" height="1.40" fill="#e0e0e0"/>
<rect x="26.00" y="430.60" width="4.00" height="1.40" fill="#e0e0e0"/>
<rect x="930.00" y="430.60" width="4.00" height="1.40" fill="#e0e0e0"/>
<rect x="26.00" y="442.60" width="7.00" height="1.40" fill="#e0e0e0"/>
<rect x="927.00" y="442.60" width="7.00" height="1.40" fill="#e0e0e0"/>
<rect x="26.00" y="454.60" width="4.00" height="1.40" fill="#e0e0e0"/>
<rect x="930.00" y="454.60" width="4.00" height="1.40" fill="#e0e0e0"/>
<rect x="26.00" y="466.60" width="4.00" height="1.40" fill="#e0e0e0"/>
<rect x="930.00" y="466.60" width="4.00" height="1.40" fill="#e0e0e0"/>
<rect x="26.00" y="478.60" width="4.00" height="1.40" fill="#e0e0e0"/>
<rect x="930.00" y="478.60" width="4.00" height="1.40" fill="#e0e0e0"/>
<rect x="26.00" y="490.60" width="4.00" height="1.40" fill="#e0e0e0"/>
<rect x="930.00" y="490.60" width="4.00" height="1.40" fill="#e0e0e0"/>
<rect x="26.00" y="502.60" width="7.00" height="1.40" fill="#e0e0e0"/>
<rect x="927.00" y="502.60" width="7.00" height="1.40" fill="#e0e0e0"/>
<rect x="26.00" y="514.60" width="4.00" height="1.40" fill="#e0e0e0"/>
<rect x="930.00" y="514.60" width="4.00" height="1.40" fill="#e0e0e0"/>
<rect x="26.00" y="526.60" width="4.00" height="1.40" fill="#e0e0e0"/>
<rect x="930.00" y="526.60" width="4.00" height="1.40" fill="#e0e0e0"/>
<rect x="26.00" y="538.60" width="4.00" height="1.40" fill="#e0e0e0"/>
<rect x="930.00" y="538.60" width="4.00" height="1.40" fill="#e0e0e0"/>
<rect x="26.00" y="550.60" width="4.00" height="1.40" fill="#e0e0e0"/>
<rect x="930.00" y="550.60" width="4.00" height="1.40" fill="#e0e0e0"/>
<rect x="26.00" y="562.60" width="7.00" height="1.40" fill="#e0e0e0"/>
<rect x="927.00" y="562.60" width="7.00" height="1.40" fill="#e0e0e0"/>
<rect x="26.00" y="574.60" width="4.00" height="1.40" fill="#e0e0e0"/>
<rect x="930.00" y="574.60" width="4.00" height="1.40" fill="#e0e0e0"/>
<rect x="26.00" y="586.60" width="4.00" height="1.40" fill="#e0e0e0"/>
<rect x="930.00" y="586.60" width="4.00" height="1.40" fill="#e0e0e0"/>
<rect x="26.00" y="598.60" width="4.00" height="1.40" fill="#e0e0e0"/>
<rect x="930.00" y="598.60" width="4.00" height="1.40" fill="#e0e0e0"/>
<rect x="26.00" y="610.60" width="4.00" height="1.40" fill="#e0e0e0"/>
<rect x="930.00" y="610.60" width="4.00" height="1.40" fill="#e0e0e0"/>
<rect x="375.50" y="322.00" width="38.30" height="3.00" fill="#f0f000"/>
<rect x="413.50" y="319.00" width="21.50" height="3.20" fill="#f0f000"/>
<rect x="435.00" y="200.50" width="36.20" height="4.70" fill="#f0f000"/>
<rect x="471.10" y="200.30" width="443.30" height="7.40" fill="#f0f000"/>
<rect x="914.00" y="203.00" width="2.00" height="121.00" fill="#f0f000"/>
<rect x="914.00" y="322.00" width="20.00" height="3.00" fill="#f0f000"/>
<rect x="377.20" y="320.30" width="1.30" height="2.50" fill="#f0f000"/>
<rect x="381.40" y="320.30" width="1.30" height="2.50" fill="#f0f000"/>
<rect x="385.00" y="320.30" width="1.30" height="2.50" fill="#f0f000"/>
<rect x="391.80" y="320.30" width="1.30" height="2.50" fill="#f0f000"/>
<rect x="397.00" y="320.30" width="1.30" height="2.50" fill="#f0f000"/>
<rect x="409.00" y="320.30" width="1.30" height="2.50" fill="#f0f000"/>
<rect x="416.10" y="317.80" width="1.30" height="2.50" fill="#f0f000"/>
<rect x="418.40" y="317.80" width="1.30" height="2.50" fill="#f0f000"/>
<rect x="422.40" y="317.80" width="1.30" height="2.50" fill="#f0f000"/>
<rect x="427.70" y="317.80" width="1.30" height="2.50" fill="#f0f000"/>
<rect x="431.10" y="317.80" width="1.30" height="2.50" fill="#f0f000"/>
<rect x="440.10" y="198.00" width="1.30" height="3.00" fill="#f0f000"/>
<rect x="442.70" y="198.00" width="1.30" height="3.00" fill="#f0f000"/>
<rect x="447.60" y="198.00" width="1.30" height="3.00" fill="#f0f000"/>
<rect x="450.80" y="198.00" width="1.30" height="3.00" fill="#f0f000"/>
<rect x="457.00" y="198.00" width="1.30" height="3.00" fill="#f0f000"/>
<rect x="463.30" y="198.00" width="1.30" height="3.00" fill="#f0f000"/>
<rect x="440.10" y="204.50" width="1.30" height="3.20" fill="#f0f000"/>
<rect x="445.00" y="204.50" width="1.30" height="3.20" fill="#f0f000"/>
<rect x="453.00" y="204.50" width="1.30" height="3.20" fill="#f0f000"/>
<rect x="455.60" y="204.50" width="1.30" height="3.20" fill="#f0f000"/>
<rect x="477.40" y="199.30" width="1.20" height="1.50" fill="#f0f000" opacity="0.6"/>
<rect x="491.40" y="199.30" width="1.20" height="1.50" fill="#f0f000" opacity="0.6"/>
<rect x="506.40" y="199.30" width="1.20" height="1.50" fill="#f0f000" opacity="0.6"/>
<rect x="559.40" y="199.30" width="1.20" height="1.50" fill="#f0f000" opacity="0.6"/>
<rect x="602.40" y="199.30" width="1.20" height="1.50" fill="#f0f000" opacity="0.6"/>
<rect x="639.40" y="199.30" width="1.20" height="1.50" fill="#f0f000" opacity="0.6"/>
<rect x="699.40" y="199.30" width="1.20" height="1.50" fill="#f0f000" opacity="0.6"/>
<rect x="734.40" y="199.30" width="1.20" height="1.50" fill="#f0f000" opacity="0.6"/>
<rect x="780.40" y="199.30" width="1.20" height="1.50" fill="#f0f000" opacity="0.6"/>
<rect x="791.40" y="199.30" width="1.20" height="1.50" fill="#f0f000" opacity="0.6"/>
<rect x="799.40" y="199.30" width="1.20" height="1.50" fill="#f0f000" opacity="0.6"/>
<rect x="859.40" y="199.30" width="1.20" height="1.50" fill="#f0f000" opacity="0.6"/>
<rect x="873.40" y="199.30" width="1.20" height="1.50" fill="#f0f000" opacity="0.6"/>
<rect x="883.40" y="199.30" width="1.20" height="1.50" fill="#f0f000" opacity="0.6"/>
<rect x="892.40" y="199.30" width="1.20" height="1.50" fill="#f0f000" opacity="0.6"/>
<rect x="904.40" y="199.30" width="1.20" height="1.50" fill="#f0f000" opacity="0.6"/>
<rect x="434.1" y="203" width="1.8" height="118" fill="#e8a080"/>
<line x1="375.0" y1="25" x2="375.0" y2="621" stroke="#501868" stroke-width="1.8"/>
<line x1="375.0" y1="25" x2="375.0" y2="621" stroke="#a82cc0" stroke-width="1.8" stroke-dasharray="2.6 2.2"/>
<line x1="435.0" y1="25" x2="435.0" y2="621" stroke="#501868" stroke-width="1.8"/>
<line x1="435.0" y1="25" x2="435.0" y2="621" stroke="#a82cc0" stroke-width="1.8" stroke-dasharray="2.6 2.2"/>
<line x1="435" y1="203" x2="435" y2="321" stroke="#c060a8" stroke-width="1.8"/>
<line x1="435" y1="203" x2="435" y2="321" stroke="#f0b098" stroke-width="1.8" stroke-dasharray="2.6 2.2"/>
</svg>

<!-- top bar -->
<div class="t" style="left:29px;top:5px;color:#081850">AKTAKOM</div>
<div class="pill" style="left:144px;top:1px;width:96px;height:21.5px;border-radius:9px / 11px;background:#ec0606"></div>
<div class="t" style="left:167px;top:3.5px;color:#300000;-webkit-text-stroke:0.4px #300000">Stop</div>
<div class="pill" style="left:299px;top:1.4px;width:361px;height:21.4px;border-radius:11px"></div>
<div class="a" style="left:312px;top:10.5px;width:337px;height:1.6px;background:#c8c820"></div>
<div class="a" style="left:353px;top:3px;width:2px;height:19px;background:#c8c8c8"></div>
<div class="a" style="left:353px;top:3px;width:4px;height:1.5px;background:#c8c8c8"></div>
<div class="a" style="left:606px;top:3px;width:2px;height:19px;background:#c8c8c8"></div>
<div class="a" style="left:604px;top:20.5px;width:4px;height:1.5px;background:#c8c8c8"></div>
<svg class="a" style="left:434px;top:1px" width="12" height="8"><path d="M2 1.5 H10 L8 4 H7 V7 H5 V4 H4 Z" fill="#d020d8"/></svg>
<div class="pill" style="left:672px;top:1.4px;width:130px;height:21.4px;border-radius:11px"></div>
<svg class="a" style="left:675px;top:3px" width="19" height="19"><path d="M1.5 1.5 H16.5 V13 L9 17.5 L1.5 13 Z" fill="none" stroke="#8a2be2" stroke-width="1.8"/><path d="M5 5 H13 V7 H10 V14 H8 V7 H5 Z" fill="#a040f0"/></svg>
<div class="t w" style="left:695px;top:5px">240.0ms</div>
<div class="pill" style="left:820px;top:1.4px;width:72px;height:21px;border-radius:11px"></div>
<div class="t w" style="left:831px;top:4px">8:58</div>
<svg class="a" style="left:900px;top:0px" width="26" height="22"><path d="M8.5 14 L17.5 8.5 L21.5 12.5 L12.5 18.8 Z" fill="#2048a8"/><path d="M10.5 14 L17 10.2 L19.5 12.6 L12.8 16.6 Z" fill="#6a5a90"/><path d="M10 15.5 L12.8 17.8 L20 13 L19.5 12.6 L12.8 16.6 Z" fill="#e8b0c8"/><path d="M7 5.5 Q9 3.2 12 3.8 Q15.5 4.2 15.5 7 Q15 9.5 12 10 L10.5 13.5 L9 12.5 L9.5 9.5 Q7 8.5 7 5.5 Z" fill="#20a020"/><path d="M7.5 6 Q8.5 4.5 10 4.5 L9.5 8.5 Q7.5 8 7.5 6 Z" fill="#70d050"/></svg>

<!-- left ch2 marker -->
<svg class="a" style="left:0;top:312px" width="26" height="24"><path d="M-2 1.2 H17 L23.5 11.5 L17 21.8 H-2 Z" fill="#000" stroke="#cce438" stroke-width="1.6"/></svg>
<div class="a" style="left:4px;top:314.5px;font-family:'Liberation Sans',sans-serif;font-size:17.5px;line-height:20px;color:#d0e030;transform:scaleX(1.12);transform-origin:0 0">2</div>

<!-- cursor box -->
<div class="a" style="left:30px;top:510px;width:222px;height:108px;border:2px solid #8cb8c8;border-radius:6px 6px 3px 3px;background:#000"></div>
<div class="t w" style="left:40px;top:516px"> x:100.0ms</div>
<svg class="a" style="left:0;top:0;overflow:visible" width="1" height="1"><path d="M40.6 529.2 H51.4 L46 522.2 Z" fill="none" stroke="#d0d0d0" stroke-width="1.4" stroke-linejoin="round"/><path d="M64.9 555.4 H75.6 L70.2 548.6 Z" fill="none" stroke="#d0d0d0" stroke-width="1.4" stroke-linejoin="round"/></svg>
<div class="t w" style="left:40px;top:542.5px">1/ x:10.00HZ</div>
<div class="t w" style="left:40px;top:572px">x1:-62.00ms</div>
<div class="t w" style="left:40px;top:598px">x2:-0.162s</div>

<!-- bottom left panels -->
<div class="a" style="left:0;top:623px;width:383px;height:97px;background:#6cb0b8"></div>
<div class="a" style="left:1.7px;top:623.6px;width:247.5px;height:47px;border-radius:5px;background:#000"></div>
<div class="a" style="left:2px;top:646.8px;width:247px;height:1px;background:#2a4a60"></div>
<div class="a" style="left:253.5px;top:623.6px;width:126.5px;height:47px;border-radius:5px;background:#000"></div>
<div class="a" style="left:1px;top:673.2px;width:379px;height:43.6px;border-radius:5px;background:#000"></div>
<div class="circ" style="left:2.7px;top:626.5px;width:19px;height:19px;background:#f01010">1</div>
<div class="t r" style="left:21px;top:630px">5V-</div>
<div class="t r" style="left:127px;top:629px">0.00div</div>
<div class="circ" style="left:2.7px;top:650.5px;width:19px;height:19px;background:#ecec10">2</div>
<div class="t y" style="left:21px;top:653px">2V-</div>
<div class="t y" style="left:127px;top:653px">0.00div</div>
<div class="t w" style="left:275.5px;top:628px">(5KS/s)</div>
<div class="t w" style="left:261px;top:651px">Depth:10K</div>
<div class="circ" style="left:2px;top:675px;width:19px;height:19px;background:#ecec10">2</div>
<div class="circ" style="left:2px;top:697.5px;width:19px;height:19px;background:#ecec10">2</div>
<div class="circ" style="left:192px;top:675px;width:19.5px;height:19px;background:#ecec10">2</div>
<div class="circ" style="left:192px;top:697.5px;width:19.5px;height:19px;background:#ecec10">2</div>
<div class="t y" style="left:25px;top:676px">F:  ?</div>
<div class="t y" style="left:25px;top:699px">+D:35.6%</div>
<div class="t y" style="left:216px;top:676px">Vk:2.730v</div>
<div class="t y" style="left:216px;top:699px">V:1.859v</div>

<!-- bottom right -->
<div class="a" style="left:494px;top:645.8px;width:464.3px;height:71.4px;background:#0462a4"></div>
<div class="pill" style="left:383px;top:624.5px;width:119px;height:20.5px;border-radius:10.5px"></div>
<div class="t w" style="left:399px;top:627.5px">M:100ms</div>
<div class="pill" style="left:798px;top:623.5px;width:155px;height:21.5px;border-radius:11px"></div>
<div class="circ" style="left:801px;top:625px;width:18.5px;height:18.5px;background:#ecec10;line-height:18.5px;font-size:16px">2</div>
<svg class="a" style="left:821px;top:625px" width="26" height="19"><path d="M1 17.6 H11.5 L16.5 1.8 H24.5" fill="none" stroke="#d8d8d8" stroke-width="1.3"/></svg>
<div class="t w" style="left:848px;top:627.5px">0.00mV</div>

<div class="a" style="left:386.5px;top:648.5px;width:108px;height:67.5px;background:#0a44a0;border-radius:3px"></div>
<div class="a" style="left:386.5px;top:648.5px;width:105.5px;height:65px;background:#0486ec;box-shadow:inset 1.5px 2px 0 #50b0f8;border-radius:3px"></div>
<div class="t" style="left:415px;top:661px;color:#0a1a58">Type</div>
<div class="a" style="left:409px;top:685px;width:60px;height:24px;background:#e4e4e4"></div>
<div class="t" style="left:410px;top:689.5px;color:#000">Image</div>
<div class="a" style="left:716.5px;top:648.5px;width:108px;height:67.5px;background:#0a44a0;border-radius:3px"></div>
<div class="a" style="left:716.5px;top:648.5px;width:105.5px;height:65px;background:#0486ec;box-shadow:inset 1.5px 2px 0 #50b0f8;border-radius:3px"></div>
<div class="a" style="left:745.5px;top:673.3px;font-family:'Liberation Sans',sans-serif;font-size:17px;line-height:20px;letter-spacing:2.8px;color:#0a1a58;-webkit-text-stroke:0.3px #0a1a58">Save</div>
</body></html>
